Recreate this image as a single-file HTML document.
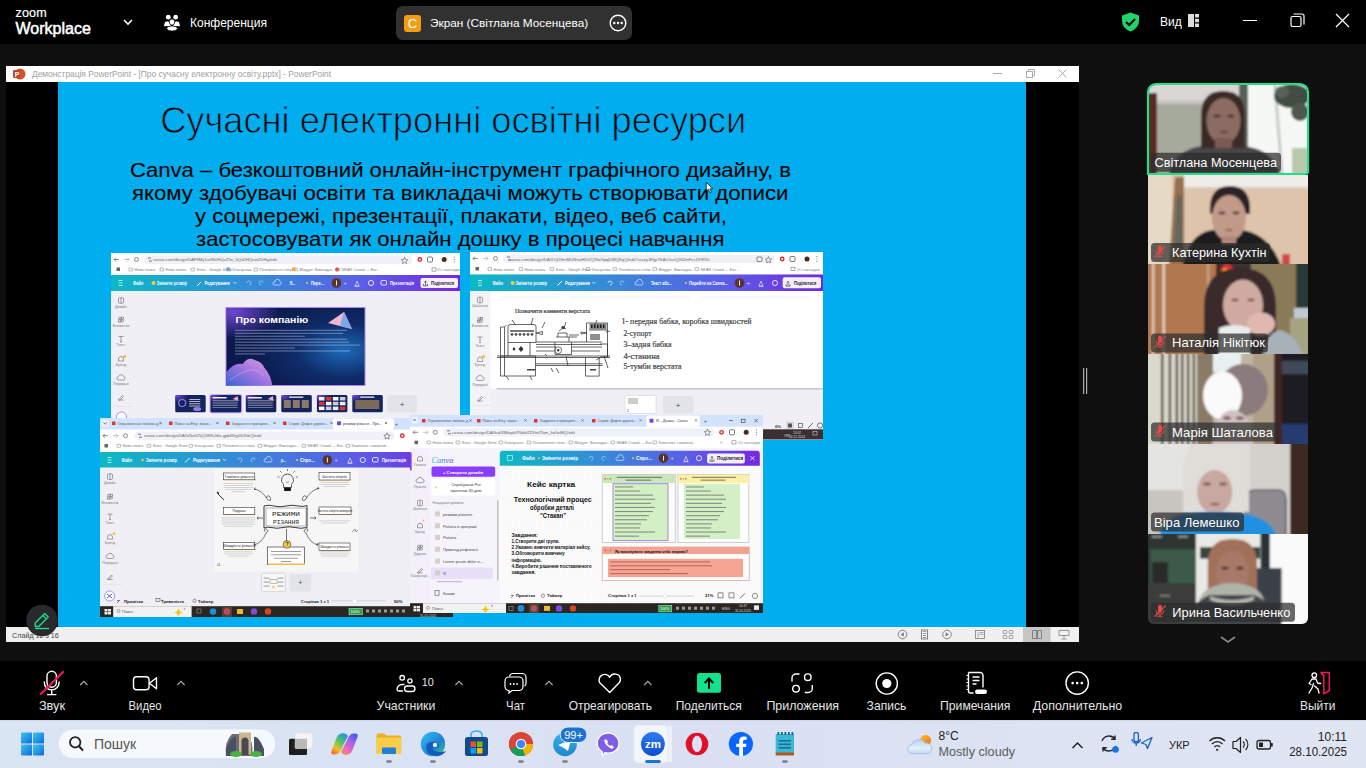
<!DOCTYPE html>
<html><head><meta charset="utf-8">
<style>
*{box-sizing:border-box;margin:0;padding:0}
html,body{width:1366px;height:768px;overflow:hidden;background:#0f0f0f;font-family:"Liberation Sans",sans-serif}
.a{position:absolute}
.w{color:#fff}
svg{display:block}
</style></head><body>
<!-- TOP BAR -->
<div class="a" style="left:0;top:0;width:1366px;height:44px;background:#000"></div>
<div class="a w" style="left:15.5px;top:6px;font-size:12.5px;line-height:14px;-webkit-text-stroke:0.2px #fff;letter-spacing:0.2px">zoom</div>
<div class="a w" style="left:15.5px;top:19.5px;font-size:16px;line-height:18px;-webkit-text-stroke:0.5px #fff">Workplace</div>
<svg class="a" style="left:122px;top:17px" width="12" height="10" viewBox="0 0 12 10"><path d="M2 3 L6 7 L10 3" stroke="#fff" stroke-width="1.6" fill="none"/></svg>
<svg class="a" style="left:162px;top:13px" width="20" height="20" viewBox="162 13 20 20"><circle cx="168.3" cy="17.2" r="2.4" fill="#fff"/><circle cx="175.6" cy="17.2" r="2.4" fill="#fff"/><path d="M163.8 26.5 v-1.5 a3.7 4 0 0 1 7.4 0 v1.5z" fill="#fff" stroke="#000" stroke-width="0.7"/><path d="M172.8 26.5 v-1.5 a3.7 4 0 0 1 7.4 0 v1.5z" fill="#fff" stroke="#000" stroke-width="0.7"/><ellipse cx="172" cy="22" rx="2.7" ry="3.1" fill="#fff" stroke="#000" stroke-width="0.7"/><ellipse cx="172.1" cy="28.5" rx="5.3" ry="2.5" fill="#fff" stroke="#000" stroke-width="0.7"/></svg>
<div class="a w" style="left:190px;top:16px;font-size:12px;line-height:14px">Конференция</div>
<div class="a" style="left:396px;top:6px;width:236px;height:34px;background:#313131;border-radius:7px"></div>
<div class="a" style="left:404px;top:15px;width:17px;height:17px;background:#f29d12;border-radius:3px;color:#fff;font-size:13px;line-height:17px;text-align:center">C</div>
<div class="a w" style="left:430px;top:16px;font-size:11.8px;line-height:14px">Экран (Світлана Мосенцева)</div>
<svg class="a" style="left:609px;top:14px" width="18" height="18" viewBox="0 0 18 18"><circle cx="9" cy="9" r="7.8" stroke="#fff" stroke-width="1.4" fill="none"/><circle cx="5.3" cy="9" r="1.2" fill="#fff"/><circle cx="9" cy="9" r="1.2" fill="#fff"/><circle cx="12.7" cy="9" r="1.2" fill="#fff"/></svg>
<svg class="a" style="left:1121px;top:12px" width="19" height="20" viewBox="0 0 19 20"><path d="M9.5 0.5 L18 3.5 L18 9 Q18 16 9.5 19.5 Q1 16 1 9 L1 3.5 Z" fill="#1fd46b"/><path d="M5 10 L8.3 13 L14 7" stroke="#000" stroke-width="2" fill="none"/></svg>
<div class="a w" style="left:1160px;top:15px;font-size:12px;line-height:14px">Вид</div>
<svg class="a" style="left:1188px;top:14px" width="11" height="13" viewBox="0 0 11 13"><rect x="0" y="0" width="6" height="13" fill="#ddd"/><rect x="7" y="0" width="4" height="3.5" fill="#ddd"/><rect x="7" y="4.75" width="4" height="3.5" fill="#ddd"/><rect x="7" y="9.5" width="4" height="3.5" fill="#ddd"/></svg>
<div class="a" style="left:1243px;top:20px;width:14px;height:1px;background:#fff"></div>
<svg class="a" style="left:1290px;top:13px" width="15" height="15" viewBox="0 0 15 15"><rect x="1" y="3.5" width="10" height="10" rx="1.5" stroke="#fff" stroke-width="1.2" fill="none"/><path d="M3.5 1 L12 1 Q14 1 14 3 L14 11.5" stroke="#fff" stroke-width="1.2" fill="none"/></svg>
<svg class="a" style="left:1335px;top:13px" width="15" height="15" viewBox="0 0 15 15"><path d="M1 1 L14 14 M14 1 L1 14" stroke="#fff" stroke-width="1.3"/></svg>
<!-- POWERPOINT WINDOW -->
<div class="a" style="left:6px;top:66px;width:1073px;height:16px;background:#fff"></div>
<svg class="a" style="left:13px;top:68px" width="13" height="12" viewBox="0 0 13 12"><circle cx="7" cy="6" r="5.5" fill="#d35230"/><rect x="0" y="2" width="7" height="8" rx="1" fill="#b7472a"/><text x="1.8" y="8.8" font-size="7" font-weight="bold" fill="#fff" font-family="Liberation Sans">P</text></svg>
<div class="a" style="left:32px;top:69px;font-size:8.4px;line-height:10px;color:#a0a0a0;white-space:nowrap">Демонстрація PowerPoint - [Про сучасну електронну освіту.pptx] - PowerPoint</div>
<div class="a" style="left:993px;top:73px;width:9px;height:1px;background:#aaa"></div>
<svg class="a" style="left:1026px;top:69px" width="9" height="9" viewBox="0 0 9 9"><rect x="0.5" y="2.5" width="6" height="6" fill="none" stroke="#aaa"/><path d="M2.5 2.5 V0.5 H8.5 V6.5 H6.5" fill="none" stroke="#aaa"/></svg>
<svg class="a" style="left:1058px;top:69px" width="9" height="9" viewBox="0 0 9 9"><path d="M0.5 0.5 L8.5 8.5 M8.5 0.5 L0.5 8.5" stroke="#aaa" stroke-width="1"/></svg>
<div class="a" style="left:6px;top:82px;width:1073px;height:545px;background:#000"></div>
<div class="a" id="slide" style="left:58px;top:82px;width:968px;height:545px;background:#00aeef;overflow:hidden"></div>
<svg class="a" style="left:0;top:82px" width="1026" height="172" viewBox="0 82 1026 172">
<text x="160.2" y="133" font-size="36" font-family="Liberation Sans" fill="#050505" stroke="#00aeef" stroke-width="0.9" textLength="586" lengthAdjust="spacingAndGlyphs">Сучасні електронні освітні ресурси</text>
<g font-size="20.3" font-family="Liberation Sans" fill="#000" stroke="#000" stroke-width="0.1">
<text x="130" y="176.5" textLength="661" lengthAdjust="spacingAndGlyphs">Canva – безкоштовний онлайн-інструмент графічного дизайну, в</text>
<text x="132" y="199.7" textLength="656.5" lengthAdjust="spacingAndGlyphs">якому здобувачі освіти та викладачі можуть створювати дописи</text>
<text x="195" y="222.7" textLength="532" lengthAdjust="spacingAndGlyphs">у соцмережі, презентації, плакати, відео, веб сайти,</text>
<text x="196" y="246" textLength="528.5" lengthAdjust="spacingAndGlyphs">застосовувати як онлайн дошку в процесі навчання</text>
</g></svg>
<!--SS-->
<svg class="a" style="left:111px;top:253px" width="349" height="167" viewBox="111 253 349 167"><defs><linearGradient id="cv1" x1="0" x2="1" y1="0" y2="0"><stop offset="0" stop-color="#0db8c6"/><stop offset="0.45" stop-color="#3a86d8"/><stop offset="0.72" stop-color="#5b5ee6"/><stop offset="1" stop-color="#7527e0"/></linearGradient>
<radialGradient id="sl1" cx="0.85" cy="0.55" r="0.7"><stop offset="0" stop-color="#1c6ab8"/><stop offset="0.5" stop-color="#0f2c6a"/><stop offset="1" stop-color="#0b1a4c"/></radialGradient>
<radialGradient id="sl1b" cx="0.05" cy="0.05" r="0.35"><stop offset="0" stop-color="#7b4be0" stop-opacity="0.9"/><stop offset="1" stop-color="#7b4be0" stop-opacity="0"/></radialGradient>
<linearGradient id="wave" x1="0" x2="1" y1="1" y2="0"><stop offset="0" stop-color="#3b6fe0"/><stop offset="0.5" stop-color="#b07ef0"/><stop offset="1" stop-color="#f0b0f0"/></linearGradient></defs><rect x="111" y="253" width="349" height="167" fill="#f0eff5"/><rect x="111" y="253" width="349" height="22" fill="#ffffff"/><path d="M114 259.5 h5 M114 259.5 l2 -2 M114 259.5 l2 2" stroke="#666" stroke-width="0.75" fill="none" /><path d="M124 259.5 h5 M129 259.5 l-2 -2 M129 259.5 l-2 2" stroke="#bbb" stroke-width="0.9" fill="none" /><circle cx="136.5" cy="259.5" r="2.0" fill="none" stroke="#666" stroke-width="0.75"/><rect x="144" y="255.5" width="268.5" height="8.5" fill="#eef1f7" rx="4.2"/><path d="M148 258.0 h3 M149 261.0 h3" stroke="#555" stroke-width="0.8" fill="none" /><text  x="153" y="261" font-size="4.2" fill="#666" font-weight="normal" font-family="Liberation Sans">canva.com/design/DAF9My1urWk/HQsZ5n_5QzDHQuinZDHg/edit</text><path d="M403.5 259.5 l1 -2.2 l1 2.2 l2.2 .3 l-1.7 1.5 l.5 2.2 l-2 -1.1 l-2 1.1 l.5 -2.2 l-1.7 -1.5z" stroke="#555" stroke-width="0.6" fill="none" /><circle cx="419.8" cy="259.5" r="2.4" fill="#e0202a" /><circle cx="419.8" cy="259.5" r="1.1" fill="#fff" /><rect x="427.5" y="257" width="5" height="5" fill="none" rx="1" stroke="#555" stroke-width="0.8"/><circle cx="444.2" cy="259.5" r="2.5" fill="#4a2a20" /><path d="M454.3 257 v0.1 M454.3 259.5 v0.1 M454.3 262 v0.1" stroke="#666" stroke-width="1" fill="none" stroke-linecap="round"/><rect x="116.5" y="267.5" width="3.5" height="3.5" fill="#666"/><rect x="129" y="268.1" width="3.6" height="2.8" fill="none" rx="0.4" stroke="#777" stroke-width="0.5"/><text  x="134.5" y="271.0" font-size="3.9" fill="#808080" font-weight="normal" font-family="Liberation Sans">Нова папка</text><rect x="160" y="268.1" width="3.6" height="2.8" fill="none" rx="0.4" stroke="#777" stroke-width="0.5"/><text  x="165.5" y="271.0" font-size="3.9" fill="#808080" font-weight="normal" font-family="Liberation Sans">Нова папка</text><rect x="191" y="268.1" width="3.6" height="2.8" fill="none" rx="0.4" stroke="#777" stroke-width="0.5"/><text  x="196.5" y="271.0" font-size="3.9" fill="#808080" font-weight="normal" font-family="Liberation Sans">Фото - Google Фото</text><rect x="227" y="268.1" width="3.6" height="2.8" fill="none" rx="0.4" stroke="#777" stroke-width="0.5"/><text  x="232.5" y="271.0" font-size="3.9" fill="#808080" font-weight="normal" font-family="Liberation Sans">Клануалка</text><rect x="254" y="268.1" width="3.6" height="2.8" fill="none" rx="0.4" stroke="#777" stroke-width="0.5"/><text  x="259.5" y="271.0" font-size="3.9" fill="#808080" font-weight="normal" font-family="Liberation Sans">Поповнення спілк...</text><rect x="294" y="268.1" width="3.6" height="2.8" fill="none" rx="0.4" stroke="#777" stroke-width="0.5"/><text  x="299.5" y="271.0" font-size="3.9" fill="#808080" font-weight="normal" font-family="Liberation Sans">Blogger: Викладач...</text><rect x="336" y="268.1" width="3.6" height="2.8" fill="none" rx="0.4" stroke="#777" stroke-width="0.5"/><text  x="341.5" y="271.0" font-size="3.9" fill="#808080" font-weight="normal" font-family="Liberation Sans">NEAR Crowd — Ear...</text><rect x="226.5" y="267.5" width="3" height="3" fill="#4fa3f7"/><rect x="292" y="267.5" width="3.5" height="3.5" fill="#f5a623" rx="0.7"/><circle cx="337" cy="269.5" r="1.9" fill="#e05050" /><text  x="437" y="271.1" font-size="4.2" fill="#8a8a8a" font-weight="normal" font-family="Liberation Sans">Усі закладки</text><rect x="432" y="267.9" width="4" height="3.2" fill="none" stroke="#777" stroke-width="0.6"/><rect x="111" y="275" width="349" height="16" fill="url(#cv1)"/><path d="M118.5 280.5 h4 M118.5 283 h4 M118.5 285.5 h4" stroke="#cfe" stroke-width="0.8" fill="none" /><text  x="133" y="285" font-size="4.8" fill="#fff" font-weight="bold" font-family="Liberation Sans" textLength="10.2" lengthAdjust="spacingAndGlyphs">Файл</text><circle cx="153.5" cy="283" r="2" fill="#f7c948" /><text  x="156.7" y="285" font-size="4.8" fill="#fff" font-weight="bold" font-family="Liberation Sans" textLength="30.2" lengthAdjust="spacingAndGlyphs">Змінити розмір</text><path d="M197 286 l4 -4" stroke="#fff" stroke-width="1" fill="none" /><text  x="204.5" y="285" font-size="4.8" fill="#fff" font-weight="bold" font-family="Liberation Sans" textLength="25" lengthAdjust="spacingAndGlyphs">Редагування</text><path d="M233.5 282 l1.5 1.5 l1.5 -1.5" stroke="#fff" stroke-width="0.7" fill="none" /><path d="M247 283 a2 2 0 1 1 2 2" stroke="#9fc7ef" stroke-width="0.8" fill="none" /><path d="M263 283 a2 2 0 1 0 -2 2" stroke="#9fc7ef" stroke-width="0.8" fill="none" /><path d="M274 285 h6 a2 2 0 0 0 0 -3.5 a2.5 2.5 0 0 0 -5 0.5 a1.5 1.5 0 0 0 -1 3z" stroke="#dbe6ff" stroke-width="0.7" fill="none" /><text  x="290" y="285" font-size="4.8" fill="#fff" font-weight="bold" font-family="Liberation Sans" textLength="5.3" lengthAdjust="spacingAndGlyphs">В...</text><circle cx="307" cy="283" r="1" fill="#f7c948" /><text  x="311" y="285" font-size="4.8" fill="#fff" font-weight="bold" font-family="Liberation Sans" textLength="13" lengthAdjust="spacingAndGlyphs">Пере...</text><circle cx="336.4" cy="283" r="4.8" fill="#5a3428" /><rect x="336" y="280.5" width="0.9" height="5" fill="#fff"/><text  x="343.5" y="285" font-size="5.5" fill="#ddd" font-weight="normal" font-family="Liberation Sans">+</text><path d="M355 286 l2 -5 l2 5z M354.5 286.3 h5" stroke="#e6e0ff" stroke-width="0.7" fill="none" /><circle cx="371" cy="283" r="2.6" fill="none" stroke="#fff" stroke-width="0.8"/><rect x="381" y="280.5" width="5.5" height="4.5" fill="none" rx="1" stroke="#fff" stroke-width="0.8"/><text  x="390" y="285" font-size="4.8" fill="#fff" font-weight="bold" font-family="Liberation Sans" textLength="24" lengthAdjust="spacingAndGlyphs">Презентація</text><rect x="420.5" y="278" width="37.5" height="10" fill="#f5efff" rx="2"/><path d="M423.5 284 v1.8 h4 v-1.8 M425.5 285 v-4 l-1.2 1.2 M425.5 281 l1.2 1.2" stroke="#333" stroke-width="0.7" fill="none" /><text  x="431" y="285" font-size="4.8" fill="#222" font-weight="bold" font-family="Liberation Sans" textLength="23" lengthAdjust="spacingAndGlyphs">Поділитися</text><rect x="118.5" y="297.7" width="5" height="5.6" rx="1.2" stroke="#666" stroke-width="0.6" fill="none"/><path d="M121 297.7 v5.6" stroke="#666" stroke-width="0.6" fill="none"/><text text-anchor="middle" x="121" y="307.5" font-size="3.6" fill="#777" font-weight="normal" font-family="Liberation Sans">Дизайн</text><circle cx="119.7" cy="318.2" r="1.1" stroke="#666" stroke-width="0.6" fill="none"/><rect x="121.3" y="317.1" width="2.2" height="2.2" stroke="#666" stroke-width="0.6" fill="none"/><rect x="118.6" y="319.8" width="2.2" height="2.2" stroke="#666" stroke-width="0.6" fill="none"/><circle cx="122.4" cy="320.9" r="1.1" stroke="#666" stroke-width="0.6" fill="none"/><text text-anchor="middle" x="121" y="326.5" font-size="3.6" fill="#777" font-weight="normal" font-family="Liberation Sans">Елементи</text><path d="M118.5 336.5 h5 M121 336.5 v5.5 M120 342 h2" stroke="#666" stroke-width="0.6" fill="none"/><text text-anchor="middle" x="121" y="346" font-size="3.6" fill="#777" font-weight="normal" font-family="Liberation Sans">Текст</text><path d="M118.5 361.0 v-2 a2.5 2.5 0 0 1 5 0 v2z" stroke="#666" stroke-width="0.6" fill="none"/><text text-anchor="middle" x="121" y="365.5" font-size="3.6" fill="#777" font-weight="normal" font-family="Liberation Sans">Бренд</text><path d="M118.2 380 a1.8 1.8 0 0 1 0.5 -3.5 a2.5 2.5 0 0 1 4.8 0 a1.8 1.8 0 0 1 0.3 3.5z" stroke="#666" stroke-width="0.6" fill="none"/><text text-anchor="middle" x="121" y="385" font-size="3.6" fill="#777" font-weight="normal" font-family="Liberation Sans">Передані</text><path d="M118.5 399.5 l4 -4 l1 1 l-4 4z M118.5 400 h5" stroke="#666" stroke-width="0.6" fill="none"/><circle cx="124.5" cy="356.5" r="1.6" fill="#f7b928" /><rect x="113" y="406" width="20" height="0.5" fill="#ddd"/><circle cx="121.5" cy="417" r="5" fill="#fff" stroke="#8a7af0" stroke-width="0.8"/><rect x="225.5" y="307" width="140" height="79" fill="#a985f5"/><rect x="226.5" y="308" width="138" height="77" fill="url(#sl1)"/><rect x="226.5" y="308" width="138" height="77" fill="url(#sl1b)"/><text  x="235.6" y="323.3" font-size="9.5" fill="#fff" font-weight="bold" font-family="Liberation Sans" textLength="72.7" lengthAdjust="spacingAndGlyphs">Про компанію</text><rect x="235" y="329.8" width="112" height="1.1" fill="#c9d0e8" opacity="0.45"/><rect x="235" y="332.75" width="108" height="1.1" fill="#c9d0e8" opacity="0.45"/><rect x="235" y="335.7" width="70" height="1.1" fill="#c9d0e8" opacity="0.45"/><rect x="235" y="338.65000000000003" width="112" height="1.1" fill="#c9d0e8" opacity="0.45"/><rect x="235" y="341.6" width="114" height="1.1" fill="#c9d0e8" opacity="0.45"/><rect x="235" y="344.55" width="125" height="1.1" fill="#c9d0e8" opacity="0.45"/><rect x="235" y="347.5" width="60" height="1.1" fill="#c9d0e8" opacity="0.45"/><rect x="235" y="350.45" width="115" height="1.1" fill="#c9d0e8" opacity="0.45"/><rect x="235" y="353.40000000000003" width="30" height="1.1" fill="#c9d0e8" opacity="0.45"/><path d="M328 323 L344 312 L352 329Z" stroke="none" stroke-width="1" fill="#f2b7d0" /><path d="M344 312 L352 329 L340 326Z" stroke="none" stroke-width="1" fill="#7fa6e8" /><path d="M226.5 372 q8 -10 16 -8 q6 -8 12 -4 q8 2 10 8 q6 6 8 18 h-46z" stroke="none" stroke-width="1" fill="url(#wave)" opacity="0.9"/><path d="M230 380 q10 -8 20 -10 q8 -1 14 6" stroke="#f0c0f0" stroke-width="0.6" fill="none" opacity="0.7"/><rect x="175.2" y="395" width="30.5" height="17.3" fill="#15245e" rx="1.5"/><rect x="175.2" y="395" width="30.5" height="17.3" fill="url(#sl1b)" rx="1.5"/><circle cx="182.2" cy="403" r="3.5" fill="none" stroke="#8a7af0" stroke-width="1.2"/><rect x="189.2" y="399.0" width="11" height="0.8" fill="#ddd"/><rect x="189.2" y="401.2" width="11" height="0.8" fill="#ddd"/><rect x="189.2" y="403.4" width="11" height="0.8" fill="#ddd"/><rect x="189.2" y="405.6" width="11" height="0.8" fill="#ddd"/><ellipse cx="197.2" cy="409" rx="4" ry="2" fill="#9a7af0" /><rect x="209.6" y="394.2" width="32.5" height="19" fill="#b69cf7" rx="2"/><rect x="210.6" y="395" width="30.5" height="17.3" fill="#15245e" rx="1.5"/><rect x="210.6" y="395" width="30.5" height="17.3" fill="url(#sl1b)" rx="1.5"/><rect x="212.6" y="397" width="14" height="1.5" fill="#eee"/><rect x="212.6" y="400.0" width="25" height="0.6" fill="#aab" rx="opacity="0.7""/><rect x="212.6" y="401.8" width="25" height="0.6" fill="#aab" rx="opacity="0.7""/><rect x="212.6" y="403.6" width="25" height="0.6" fill="#aab" rx="opacity="0.7""/><rect x="212.6" y="405.4" width="25" height="0.6" fill="#aab" rx="opacity="0.7""/><rect x="212.6" y="407.2" width="25" height="0.6" fill="#aab" rx="opacity="0.7""/><path d="M232.6 399 l5 -3 l1 5z" stroke="none" stroke-width="1" fill="#e8a8d0" /><rect x="245.8" y="395" width="30.5" height="17.3" fill="#15245e" rx="1.5"/><rect x="245.8" y="395" width="30.5" height="17.3" fill="url(#sl1b)" rx="1.5"/><rect x="247.8" y="397" width="14" height="1.5" fill="#eee"/><rect x="247.8" y="400.0" width="25" height="0.6" fill="#aab" rx="opacity="0.7""/><rect x="247.8" y="401.8" width="25" height="0.6" fill="#aab" rx="opacity="0.7""/><rect x="247.8" y="403.6" width="25" height="0.6" fill="#aab" rx="opacity="0.7""/><rect x="247.8" y="405.4" width="25" height="0.6" fill="#aab" rx="opacity="0.7""/><rect x="247.8" y="407.2" width="25" height="0.6" fill="#aab" rx="opacity="0.7""/><path d="M267.8 399 l5 -3 l1 5z" stroke="none" stroke-width="1" fill="#e8a8d0" /><rect x="281.3" y="395" width="30.5" height="17.3" fill="#15245e" rx="1.5"/><rect x="281.3" y="395" width="30.5" height="17.3" fill="url(#sl1b)" rx="1.5"/><rect x="289.3" y="396.5" width="14" height="1.3" fill="#eee"/><rect x="283.8" y="400" width="7" height="8" fill="#8a7a6a"/><rect x="292.8" y="400" width="7" height="8" fill="#8a7a6a"/><rect x="301.8" y="400" width="7" height="8" fill="#8a7a6a"/><rect x="316.9" y="395" width="30.5" height="17.3" fill="#15245e" rx="1.5"/><rect x="316.9" y="395" width="30.5" height="17.3" fill="url(#sl1b)" rx="1.5"/><rect x="318.9" y="397.0" width="5.5" height="3.5" fill="#eee"/><rect x="318.9" y="401.8" width="5.5" height="3.5" fill="#d33"/><rect x="318.9" y="406.6" width="5.5" height="3.5" fill="#fff"/><rect x="325.9" y="397.0" width="5.5" height="3.5" fill="#d33"/><rect x="325.9" y="401.8" width="5.5" height="3.5" fill="#fff"/><rect x="325.9" y="406.6" width="5.5" height="3.5" fill="#ccd"/><rect x="332.9" y="397.0" width="5.5" height="3.5" fill="#fff"/><rect x="332.9" y="401.8" width="5.5" height="3.5" fill="#ccd"/><rect x="332.9" y="406.6" width="5.5" height="3.5" fill="#eee"/><rect x="339.9" y="397.0" width="5.5" height="3.5" fill="#ccd"/><rect x="339.9" y="401.8" width="5.5" height="3.5" fill="#eee"/><rect x="339.9" y="406.6" width="5.5" height="3.5" fill="#d33"/><rect x="352.3" y="395" width="30.5" height="17.3" fill="#15245e" rx="1.5"/><rect x="352.3" y="395" width="30.5" height="17.3" fill="url(#sl1b)" rx="1.5"/><rect x="360.3" y="396.5" width="14" height="1.3" fill="#eee"/><rect x="355.3" y="400" width="24" height="9" fill="#7a6a5a"/><rect x="387" y="395" width="30" height="17.5" fill="#e3e3ea" rx="1.5"/><text text-anchor="middle" x="402" y="406.5" font-size="8" fill="#444" font-weight="normal" font-family="Liberation Sans">+</text></svg>
<svg class="a" style="left:470px;top:252px" width="353" height="188" viewBox="470 252 353 188"><defs><linearGradient id="cv2" x1="0" x2="1" y1="0" y2="0"><stop offset="0" stop-color="#0db8c6"/><stop offset="0.42" stop-color="#3a86d8"/><stop offset="0.72" stop-color="#5b5ee6"/><stop offset="1" stop-color="#7527e0"/></linearGradient></defs><rect x="470" y="252" width="353" height="188" fill="#f0eff5"/><rect x="470" y="252" width="353" height="22" fill="#ffffff"/><path d="M473 258.5 h5 M473 258.5 l2 -2 M473 258.5 l2 2" stroke="#666" stroke-width="0.75" fill="none" /><path d="M483 258.5 h5 M488 258.5 l-2 -2 M488 258.5 l-2 2" stroke="#bbb" stroke-width="0.9" fill="none" /><circle cx="495.5" cy="258.5" r="2.0" fill="none" stroke="#666" stroke-width="0.75"/><rect x="503" y="254.5" width="272" height="8.5" fill="#eef1f7" rx="4.2"/><path d="M507 257.0 h3 M508 260.0 h3" stroke="#555" stroke-width="0.8" fill="none" /><text  x="509" y="261" font-size="4.2" fill="#666" font-weight="normal" font-family="Liberation Sans">canva.com/design/DAGYjUGmMU/ExxHDrZQfVoGpqDiMQKqQ/edit?ui=eyJEIjp7IkAiOnsiQiI6ZmFsc2V9fX0</text><rect x="757" y="257" width="5" height="4.5" fill="none" rx="0.6" stroke="#555" stroke-width="0.7"/><path d="M767.5 258.8 l1 -2.2 l1 2.2 l2.2 .3 l-1.7 1.5 l.5 2.2 l-2 -1.1 l-2 1.1 l.5 -2.2 l-1.7 -1.5z" stroke="#555" stroke-width="0.6" fill="none" /><circle cx="782.2" cy="259" r="2.4" fill="#e0202a" /><circle cx="782.2" cy="259" r="1.1" fill="#fff" /><rect x="790" y="256.5" width="5" height="5" fill="none" rx="1" stroke="#555" stroke-width="0.8"/><circle cx="807" cy="259" r="2.5" fill="#4a2a20" /><path d="M816.9 256.5 v0.1 M816.9 259 v0.1 M816.9 261.5 v0.1" stroke="#666" stroke-width="1" fill="none" stroke-linecap="round"/><rect x="475.5" y="267" width="3.5" height="3.5" fill="#666"/><rect x="488" y="267.6" width="3.6" height="2.8" fill="none" rx="0.4" stroke="#777" stroke-width="0.5"/><text  x="493.5" y="270.5" font-size="3.9" fill="#808080" font-weight="normal" font-family="Liberation Sans">Нова папка</text><rect x="519" y="267.6" width="3.6" height="2.8" fill="none" rx="0.4" stroke="#777" stroke-width="0.5"/><text  x="524.5" y="270.5" font-size="3.9" fill="#808080" font-weight="normal" font-family="Liberation Sans">Нова папка</text><rect x="550" y="267.6" width="3.6" height="2.8" fill="none" rx="0.4" stroke="#777" stroke-width="0.5"/><text  x="555.5" y="270.5" font-size="3.9" fill="#808080" font-weight="normal" font-family="Liberation Sans">Фото - Google Фото</text><rect x="586" y="267.6" width="3.6" height="2.8" fill="none" rx="0.4" stroke="#777" stroke-width="0.5"/><text  x="591.5" y="270.5" font-size="3.9" fill="#808080" font-weight="normal" font-family="Liberation Sans">Клануалка</text><rect x="613" y="267.6" width="3.6" height="2.8" fill="none" rx="0.4" stroke="#777" stroke-width="0.5"/><text  x="618.5" y="270.5" font-size="3.9" fill="#808080" font-weight="normal" font-family="Liberation Sans">Поповнення спілк...</text><rect x="653" y="267.6" width="3.6" height="2.8" fill="none" rx="0.4" stroke="#777" stroke-width="0.5"/><text  x="658.5" y="270.5" font-size="3.9" fill="#808080" font-weight="normal" font-family="Liberation Sans">Blogger: Викладач...</text><rect x="695" y="267.6" width="3.6" height="2.8" fill="none" rx="0.4" stroke="#777" stroke-width="0.5"/><text  x="700.5" y="270.5" font-size="3.9" fill="#808080" font-weight="normal" font-family="Liberation Sans">NEAR Crowd — Ear...</text><text  x="797" y="270.6" font-size="3.9" fill="#8a8a8a" font-weight="normal" font-family="Liberation Sans">Усі закладки</text><rect x="791" y="267.4" width="4" height="3.2" fill="none" stroke="#777" stroke-width="0.6"/><rect x="470" y="274.5" width="353" height="16.5" fill="url(#cv2)"/><path d="M478 280.5 h4 M478 283 h4 M478 285.5 h4" stroke="#cfe" stroke-width="0.8" fill="none" /><text  x="492.4" y="284.6" font-size="4.8" fill="#fff" font-weight="bold" font-family="Liberation Sans" textLength="10.6" lengthAdjust="spacingAndGlyphs">Файл</text><circle cx="512.7" cy="283" r="2" fill="#f7c948" /><text  x="515.5" y="284.6" font-size="4.8" fill="#fff" font-weight="bold" font-family="Liberation Sans" textLength="31.5" lengthAdjust="spacingAndGlyphs">Змінити розмір</text><path d="M557.5 285.5 l4.5 -4.5" stroke="#fff" stroke-width="1" fill="none" /><text  x="564.9" y="284.6" font-size="4.8" fill="#fff" font-weight="bold" font-family="Liberation Sans" textLength="25" lengthAdjust="spacingAndGlyphs">Редагування</text><path d="M592.3 282 l1.5 1.5 l1.5 -1.5" stroke="#fff" stroke-width="0.7" fill="none" /><path d="M608 283 a2 2 0 1 1 2 2" stroke="#e0ecff" stroke-width="0.8" fill="none" /><path d="M624 283 a2 2 0 1 0 -2 2" stroke="#9fc7ef" stroke-width="0.8" fill="none" /><path d="M636 285 h6 a2 2 0 0 0 0 -3.5 a2.5 2.5 0 0 0 -5 0.5 a1.5 1.5 0 0 0 -1 3z" stroke="#dbe6ff" stroke-width="0.7" fill="none" /><text  x="650.9" y="284.6" font-size="4.8" fill="#fff" font-weight="bold" font-family="Liberation Sans" textLength="21" lengthAdjust="spacingAndGlyphs">Текст абз...</text><circle cx="685.8" cy="283" r="1" fill="#f7c948" /><text  x="689.1" y="284.6" font-size="4.8" fill="#fff" font-weight="bold" font-family="Liberation Sans" textLength="38.6" lengthAdjust="spacingAndGlyphs">Перейти на Canva...</text><circle cx="739.5" cy="283" r="4.8" fill="#5a3428" /><rect x="739.1" y="280.5" width="0.9" height="5" fill="#fff"/><text  x="746.5" y="285" font-size="6" fill="#eee" font-weight="normal" font-family="Liberation Sans">+</text><path d="M759 286 l2 -5 l2 5z M758.5 286.3 h5" stroke="#e6e0ff" stroke-width="0.7" fill="none" /><circle cx="775" cy="283" r="2.6" fill="none" stroke="#fff" stroke-width="0.8"/><rect x="782.7" y="277.2" width="38.3" height="11" fill="#f5efff" rx="2"/><path d="M786 284.3 v1.8 h4 v-1.8 M788 285.3 v-4 l-1.2 1.2 M788 281.3 l1.2 1.2" stroke="#333" stroke-width="0.7" fill="none" /><text  x="793.9" y="284.6" font-size="4.8" fill="#222" font-weight="bold" font-family="Liberation Sans" textLength="22.4" lengthAdjust="spacingAndGlyphs">Поділитися</text><rect x="470" y="291" width="20.5" height="149" fill="#f3f3f7"/><rect x="490.5" y="291" width="332.5" height="98" fill="#ffffff"/><rect x="496.7" y="388" width="326.3" height="1.6" fill="#c8c8c8"/><rect x="477.5" y="297.2" width="5" height="5.6" rx="1.2" stroke="#666" stroke-width="0.6" fill="none"/><path d="M480 297.2 v5.6" stroke="#666" stroke-width="0.6" fill="none"/><text text-anchor="middle" x="480" y="307" font-size="3.6" fill="#777" font-weight="normal" font-family="Liberation Sans">Шаблони</text><circle cx="478.7" cy="318.7" r="1.1" stroke="#666" stroke-width="0.6" fill="none"/><rect x="480.3" y="317.6" width="2.2" height="2.2" stroke="#666" stroke-width="0.6" fill="none"/><rect x="477.6" y="320.3" width="2.2" height="2.2" stroke="#666" stroke-width="0.6" fill="none"/><circle cx="481.4" cy="321.4" r="1.1" stroke="#666" stroke-width="0.6" fill="none"/><text text-anchor="middle" x="480" y="327" font-size="3.6" fill="#777" font-weight="normal" font-family="Liberation Sans">Елементи</text><path d="M477.5 337.0 h5 M480 337.0 v5.5 M479 342.5 h2" stroke="#666" stroke-width="0.6" fill="none"/><text text-anchor="middle" x="480" y="346.5" font-size="3.6" fill="#777" font-weight="normal" font-family="Liberation Sans">Текст</text><path d="M477.5 361.5 v-2 a2.5 2.5 0 0 1 5 0 v2z" stroke="#666" stroke-width="0.6" fill="none"/><text text-anchor="middle" x="480" y="366" font-size="3.6" fill="#777" font-weight="normal" font-family="Liberation Sans">Бренд</text><path d="M477.2 380.5 a1.8 1.8 0 0 1 0.5 -3.5 a2.5 2.5 0 0 1 4.8 0 a1.8 1.8 0 0 1 0.3 3.5z" stroke="#666" stroke-width="0.6" fill="none"/><text text-anchor="middle" x="480" y="385.5" font-size="3.6" fill="#777" font-weight="normal" font-family="Liberation Sans">Передані</text><path d="M477.5 400.5 l4 -4 l1 1 l-4 4z M477.5 401 h5" stroke="#666" stroke-width="0.6" fill="none"/><circle cx="483.5" cy="356.5" r="1.6" fill="#f7b928" /><rect x="472" y="405.5" width="20" height="0.5" fill="#ddd"/><rect x="500" y="296" width="60" height="3" fill="#f9f9f9"/><rect x="570" y="296" width="120" height="3" fill="#f9f9f9"/><rect x="700" y="296" width="110" height="3" fill="#f9f9f9"/><text font-family="Liberation Serif" stroke="#333" stroke-width="0.15" x="515" y="312.6" font-size="5.4" fill="#333" font-weight="normal" font-family="Liberation Sans" textLength="75" lengthAdjust="spacingAndGlyphs">Позначити елементи верстата</text><path d="M508 342.5 v-16 a2 2 0 0 1 2 -2 h24 a2 2 0 0 1 2 2 v16 M500.5 376 v-49 h4 l2 -2 M504.5 327 v49 M500.5 356 h35 M500.5 376 h35 v-20 M497 356 h113 M497 357.5 h113 M508 342.5 v13.5 M530 342.5 v13.5 M508 342.5 h28 M536 342 h66 M536 344.5 h66 M536 347 h20 M572 347 h30 M536 351 h18 M572 351 h28 M555 342 v12.5 h16.5 v-12.5 M556 337 h13 v5 M558 337 v-4 h9 v4 M559 331 l4 -3 l3 1 M569 335 h10 M569 337 h8 M586.5 342 v-19 h21 v34 h-7 M589 330 h18 M600 344 h7.5 v13 M535.6 363.8 h67 M535.6 365.5 h67 M585.5 357.7 v18.4 h13.7 v-18.4 M536 333 l6.5 -1.5 v3z M587 333 l-6 -1 v2z M545 354 l2 2 M512 320 l3 4 M533 318 l-2 7 M545 322 l-3 6 M566 322 l-2 6 M597 320 l-2 5 M606 332 l4 -1 M506 376 l3 4 M530 376 l2 4 M551 368 l2 4 M556 368 l3 5 M566 356 l2 10 M596 360 l5 -3 M604 356 l4 12" stroke="#333" stroke-width="0.75" fill="none" /><circle cx="512" cy="334.4" r="1.4" fill="#555" /><circle cx="516" cy="334.4" r="1.4" fill="#555" /><circle cx="520" cy="334.4" r="1.4" fill="#555" /><circle cx="524" cy="334.4" r="1.4" fill="#555" /><circle cx="528" cy="334.4" r="1.4" fill="#555" /><circle cx="532" cy="334.4" r="1.4" fill="#555" /><rect x="510" y="330" width="24" height="2" fill="#777"/><path d="M521 346 l2.5 3 l-2.5 3 l-2.5 -3z M514 347 l1.5 2 l-1.5 2 l-1.5 -2z" stroke="none" stroke-width="1" fill="#333" /><circle cx="558.2" cy="350.2" r="3.4" fill="none" stroke="#333" stroke-width="0.7"/><circle cx="558.2" cy="350.2" r="1.2" fill="#333" /><rect x="589.5" y="323.5" width="17" height="6" fill="#555" opacity="0.7"/><rect x="591" y="324.5" width="1.5" height="3.5" fill="#222"/><rect x="594" y="324.5" width="1.5" height="3.5" fill="#222"/><rect x="597" y="324.5" width="1.5" height="3.5" fill="#222"/><rect x="600" y="324.5" width="1.5" height="3.5" fill="#222"/><rect x="603" y="324.5" width="1.5" height="3.5" fill="#222"/><rect x="590" y="334" width="10" height="6" fill="#444" opacity="0.6"/><circle cx="563" cy="327.5" r="1.6" fill="#333" /><rect x="527" y="369" width="8" height="1.5" fill="#444"/><rect x="590" y="369" width="6" height="1.5" fill="#444"/><text font-family="Liberation Serif" stroke="#484848" stroke-width="0.2" x="621.5" y="323.7" font-size="7.4" fill="#484848" font-weight="normal" font-family="Liberation Sans" textLength="130" lengthAdjust="spacingAndGlyphs">1- передня бабка, коробка  швидкостей</text><text font-family="Liberation Serif" stroke="#484848" stroke-width="0.2" x="623.5" y="335.6" font-size="7.4" fill="#484848" font-weight="normal" font-family="Liberation Sans" textLength="28" lengthAdjust="spacingAndGlyphs">2-супорт</text><text font-family="Liberation Serif" stroke="#484848" stroke-width="0.2" x="623.5" y="346.8" font-size="7.4" fill="#484848" font-weight="normal" font-family="Liberation Sans" textLength="48" lengthAdjust="spacingAndGlyphs">3–задня бабка</text><text font-family="Liberation Serif" stroke="#484848" stroke-width="0.2" x="623.5" y="358.6" font-size="7.4" fill="#484848" font-weight="normal" font-family="Liberation Sans" textLength="36" lengthAdjust="spacingAndGlyphs">4-станина</text><text font-family="Liberation Serif" stroke="#484848" stroke-width="0.2" x="623.5" y="369.2" font-size="7.4" fill="#484848" font-weight="normal" font-family="Liberation Sans" textLength="58" lengthAdjust="spacingAndGlyphs">5-тумби верстата</text><rect x="625" y="395.5" width="31" height="18" fill="#ffffff" rx="1.5" stroke="#ccc" stroke-width="0.5"/><rect x="628" y="398" width="10" height="6" fill="#999" opacity="0.5"/><text  x="627" y="411.5" font-size="3.5" fill="#333" font-weight="normal" font-family="Liberation Sans">1</text><rect x="663" y="396" width="30.5" height="17.5" fill="#e3e3ea" rx="1.5"/><text text-anchor="middle" x="678" y="407.5" font-size="8" fill="#444" font-weight="normal" font-family="Liberation Sans">+</text><text  x="775" y="428" font-size="4.2" fill="#333" font-weight="bold" font-family="Liberation Sans">6%</text><rect x="786" y="421.5" width="8" height="8" fill="#d8d8de" rx="1"/><rect x="788" y="423.5" width="4" height="4" fill="#555"/><rect x="798.5" y="423.5" width="4" height="4" fill="none" stroke="#555" stroke-width="0.7"/><path d="M808 428 l5 -5" stroke="#444" stroke-width="0.8" fill="none" /><circle cx="820" cy="425.5" r="2.6" fill="none" stroke="#444" stroke-width="0.7"/><rect x="470" y="429.3" width="353" height="10.2" fill="#3a3030"/><text text-anchor="middle" x="797" y="433.5" font-size="3.2" fill="#ddd" font-weight="normal" font-family="Liberation Sans">13:02</text><text text-anchor="middle" x="797" y="438" font-size="3.2" fill="#ddd" font-weight="normal" font-family="Liberation Sans">04.12.2024</text><rect x="813" y="431.5" width="4" height="3.5" fill="none" stroke="#ccc" stroke-width="0.6"/><text  x="784" y="436.5" font-size="3.3" fill="#ddd" font-weight="normal" font-family="Liberation Sans">УКР</text></svg>
<svg class="a" style="left:100px;top:418px" width="353" height="199" viewBox="100 418 353 199"><defs><linearGradient id="cv3" x1="0" x2="1" y1="0" y2="0"><stop offset="0" stop-color="#0db8c6"/><stop offset="0.42" stop-color="#3a86d8"/><stop offset="0.72" stop-color="#5b5ee6"/><stop offset="1" stop-color="#7527e0"/></linearGradient></defs><rect x="100" y="418" width="353" height="199" fill="#f0eff5"/><rect x="100" y="418" width="353" height="11.6" fill="#d3e3fd"/><rect x="101.5" y="419.5" width="7.5" height="7.5" fill="#e8f0fe" rx="1.5"/><path d="M103.5 422.5 l1.7 1.7 l1.7 -1.7" stroke="#444" stroke-width="0.7" fill="none" /><rect x="112" y="421.5" width="3.5" height="3.5" fill="#d33" rx="0.5"/><text  x="117.5" y="425" font-size="3.6" fill="#555" font-weight="normal" font-family="Liberation Sans">Ограниченная любовь д...</text><path d="M159.5 422 l2 2 M161.5 422 l-2 2" stroke="#444" stroke-width="0.6" fill="none" /><rect x="169" y="421.5" width="3.5" height="3.5" fill="#d33" rx="0.5"/><text  x="174.5" y="425" font-size="3.6" fill="#555" font-weight="normal" font-family="Liberation Sans">Поиск на Etsy: заказ...</text><path d="M216.5 422 l2 2 M218.5 422 l-2 2" stroke="#444" stroke-width="0.6" fill="none" /><rect x="226" y="421.5" width="3.5" height="3.5" fill="#d33" rx="0.5"/><text  x="231.5" y="425" font-size="3.6" fill="#555" font-weight="normal" font-family="Liberation Sans">Завдання в принципе...</text><path d="M273.5 422 l2 2 M275.5 422 l-2 2" stroke="#444" stroke-width="0.6" fill="none" /><rect x="283" y="421.5" width="3.5" height="3.5" fill="#d33" rx="0.5"/><text  x="288.5" y="425" font-size="3.6" fill="#555" font-weight="normal" font-family="Liberation Sans">Стрим: Дефне дорого...</text><path d="M330.5 422 l2 2 M332.5 422 l-2 2" stroke="#444" stroke-width="0.6" fill="none" /><rect x="333" y="418.5" width="61" height="11.1" fill="#ffffff" rx="2"/><rect x="337" y="421.3" width="4" height="4" fill="#6a4be0" rx="0.8"/><text  x="343" y="425" font-size="3.6" fill="#333" font-weight="normal" font-family="Liberation Sans">режими різання - Пре...</text><path d="M385 422 l2 2 M387 422 l-2 2" stroke="#444" stroke-width="0.6" fill="none" /><text  x="395" y="425.5" font-size="5" fill="#444" font-weight="normal" font-family="Liberation Sans">+</text><rect x="100" y="429.6" width="353" height="22.4" fill="#ffffff"/><path d="M103 435.7 h5 M103 435.7 l2 -2 M103 435.7 l2 2" stroke="#666" stroke-width="0.75" fill="none" /><path d="M113 435.7 h5 M118 435.7 l-2 -2 M118 435.7 l-2 2" stroke="#bbb" stroke-width="0.9" fill="none" /><circle cx="125.5" cy="435.7" r="2.0" fill="none" stroke="#666" stroke-width="0.75"/><rect x="134.2" y="431.5" width="260.3" height="8.5" fill="#eef1f7" rx="4.2"/><path d="M138 434.2 h3 M139 437.2 h3" stroke="#555" stroke-width="0.8" fill="none" /><text  x="144" y="437.2" font-size="4.2" fill="#666" font-weight="normal" font-family="Liberation Sans">canva.com/design/DAGZbr625jQ/WfkJtkk-gpb66fg0S2fdrQ/edit</text><path d="M386 435 l1 -2.2 l1 2.2 l2.2 .3 l-1.7 1.5 l.5 2.2 l-2 -1.1 l-2 1.1 l.5 -2.2 l-1.7 -1.5z" stroke="#555" stroke-width="0.6" fill="none" /><circle cx="402.3" cy="435.7" r="2.4" fill="#e0202a" /><circle cx="402.3" cy="435.7" r="1.1" fill="#fff" /><rect x="104.5" y="444" width="3.5" height="3.5" fill="#666"/><rect x="117" y="444.40000000000003" width="3.6" height="2.8" fill="none" rx="0.4" stroke="#777" stroke-width="0.5"/><text  x="122.5" y="447.3" font-size="3.9" fill="#808080" font-weight="normal" font-family="Liberation Sans">Нова папка</text><rect x="147" y="444.40000000000003" width="3.6" height="2.8" fill="none" rx="0.4" stroke="#777" stroke-width="0.5"/><text  x="152.5" y="447.3" font-size="3.9" fill="#808080" font-weight="normal" font-family="Liberation Sans">Фото - Google Фото</text><rect x="189" y="444.40000000000003" width="3.6" height="2.8" fill="none" rx="0.4" stroke="#777" stroke-width="0.5"/><text  x="194.5" y="447.3" font-size="3.9" fill="#808080" font-weight="normal" font-family="Liberation Sans">Клануалка</text><rect x="217" y="444.40000000000003" width="3.6" height="2.8" fill="none" rx="0.4" stroke="#777" stroke-width="0.5"/><text  x="222.5" y="447.3" font-size="3.9" fill="#808080" font-weight="normal" font-family="Liberation Sans">Поповнення спілк...</text><rect x="258" y="444.40000000000003" width="3.6" height="2.8" fill="none" rx="0.4" stroke="#777" stroke-width="0.5"/><text  x="263.5" y="447.3" font-size="3.9" fill="#808080" font-weight="normal" font-family="Liberation Sans">Blogger: Викладач...</text><rect x="302" y="444.40000000000003" width="3.6" height="2.8" fill="none" rx="0.4" stroke="#777" stroke-width="0.5"/><text  x="307.5" y="447.3" font-size="3.9" fill="#808080" font-weight="normal" font-family="Liberation Sans">NEAR Crowd — Ear...</text><rect x="346" y="444.40000000000003" width="3.6" height="2.8" fill="none" rx="0.4" stroke="#777" stroke-width="0.5"/><text  x="351.5" y="447.3" font-size="3.9" fill="#808080" font-weight="normal" font-family="Liberation Sans">Комплекс самоосві...</text><rect x="100" y="452" width="353" height="15.5" fill="url(#cv3)"/><path d="M107.5 457.5 h4 M107.5 460 h4 M107.5 462.5 h4" stroke="#cfe" stroke-width="0.8" fill="none" /><text  x="121.6" y="461.7" font-size="4.8" fill="#fff" font-weight="bold" font-family="Liberation Sans" textLength="10.4" lengthAdjust="spacingAndGlyphs">Файл</text><circle cx="142.5" cy="460" r="1.2" fill="#f7c948" /><text  x="146" y="461.7" font-size="4.8" fill="#fff" font-weight="bold" font-family="Liberation Sans" textLength="31" lengthAdjust="spacingAndGlyphs">Змінити розмір</text><path d="M185 462.5 l4.5 -4.5" stroke="#fff" stroke-width="1" fill="none" /><text  x="193" y="461.7" font-size="4.8" fill="#fff" font-weight="bold" font-family="Liberation Sans" textLength="27" lengthAdjust="spacingAndGlyphs">Редагування</text><path d="M223 459 l1.5 1.5 l1.5 -1.5" stroke="#fff" stroke-width="0.7" fill="none" /><path d="M238 460 a2 2 0 1 1 2 2" stroke="#9fc7ef" stroke-width="0.8" fill="none" /><path d="M255 460 a2 2 0 1 0 -2 2" stroke="#9fc7ef" stroke-width="0.8" fill="none" /><path d="M265 462 h6 a2 2 0 0 0 0 -3.5 a2.5 2.5 0 0 0 -5 0.5 a1.5 1.5 0 0 0 -1 3z" stroke="#dbe6ff" stroke-width="0.7" fill="none" /><text  x="281" y="461.7" font-size="4.8" fill="#fff" font-weight="bold" font-family="Liberation Sans" textLength="5" lengthAdjust="spacingAndGlyphs">р...</text><circle cx="297" cy="460" r="1" fill="#f7c948" /><text  x="300" y="461.7" font-size="4.8" fill="#fff" font-weight="bold" font-family="Liberation Sans" textLength="14.5" lengthAdjust="spacingAndGlyphs">Спро...</text><circle cx="327.3" cy="460" r="4.8" fill="#5a3428" /><rect x="326.9" y="457.5" width="0.9" height="5" fill="#fff"/><text  x="334.5" y="462" font-size="5.5" fill="#ddd" font-weight="normal" font-family="Liberation Sans">+</text><path d="M348 463 l2 -5 l2 5z M347.5 463.3 h5" stroke="#e6e0ff" stroke-width="0.7" fill="none" /><circle cx="362.8" cy="460" r="2.6" fill="none" stroke="#fff" stroke-width="0.8"/><rect x="372.5" y="457.5" width="5.5" height="4.5" fill="none" rx="1" stroke="#fff" stroke-width="0.8"/><text  x="382" y="461.7" font-size="4.8" fill="#fff" font-weight="bold" font-family="Liberation Sans" textLength="24" lengthAdjust="spacingAndGlyphs">Презентація</text><rect x="107.5" y="473.8" width="5" height="5.6" rx="1.2" stroke="#666" stroke-width="0.6" fill="none"/><path d="M110 473.8 v5.6" stroke="#666" stroke-width="0.6" fill="none"/><text text-anchor="middle" x="110" y="483.6" font-size="3.6" fill="#777" font-weight="normal" font-family="Liberation Sans">Дизайн</text><circle cx="108.7" cy="495.3" r="1.1" stroke="#666" stroke-width="0.6" fill="none"/><rect x="110.3" y="494.20000000000005" width="2.2" height="2.2" stroke="#666" stroke-width="0.6" fill="none"/><rect x="107.6" y="496.90000000000003" width="2.2" height="2.2" stroke="#666" stroke-width="0.6" fill="none"/><circle cx="111.4" cy="498.0" r="1.1" stroke="#666" stroke-width="0.6" fill="none"/><text text-anchor="middle" x="110" y="503.6" font-size="3.6" fill="#777" font-weight="normal" font-family="Liberation Sans">Елементи</text><path d="M107.5 514.1 h5 M110 514.1 v5.5 M109 519.6 h2" stroke="#666" stroke-width="0.6" fill="none"/><text text-anchor="middle" x="110" y="523.6" font-size="3.6" fill="#777" font-weight="normal" font-family="Liberation Sans">Текст</text><path d="M107.5 539.1 v-2 a2.5 2.5 0 0 1 5 0 v2z" stroke="#666" stroke-width="0.6" fill="none"/><text text-anchor="middle" x="110" y="543.6" font-size="3.6" fill="#777" font-weight="normal" font-family="Liberation Sans">Бренд</text><path d="M107.2 558.5 a1.8 1.8 0 0 1 0.5 -3.5 a2.5 2.5 0 0 1 4.8 0 a1.8 1.8 0 0 1 0.3 3.5z" stroke="#666" stroke-width="0.6" fill="none"/><text text-anchor="middle" x="110" y="563.5" font-size="3.6" fill="#777" font-weight="normal" font-family="Liberation Sans">Передані</text><path d="M107.5 579.0 l4 -4 l1 1 l-4 4z M107.5 579.5 h5" stroke="#666" stroke-width="0.6" fill="none"/><circle cx="114" cy="533.5" r="1.2" fill="#f7b928" /><rect x="102" y="584.5" width="20" height="0.5" fill="#ddd"/><circle cx="109.6" cy="596" r="5" fill="#fff" stroke="#8a7af0" stroke-width="0.8"/><path d="M107 594 l5 4 M112 594 l-5 4" stroke="#3a5ad8" stroke-width="0.9" fill="none" /><rect x="214" y="468.5" width="144" height="103" fill="#f6f6f6"/><rect x="223.9" y="478.6" width="31.5" height="1.6" fill="#f0c040"/><rect x="223.3" y="473" width="31.5" height="6.8" fill="#ffffff" stroke="#222" stroke-width="0.55"/><text text-anchor="middle" x="239.05" y="477.7" font-size="3.8" fill="#222" font-weight="normal" font-family="Liberation Sans">Глибина різання</text><rect x="223.9" y="513.0999999999999" width="31.5" height="1.6" fill="#f0c040"/><rect x="223.3" y="507.5" width="31.5" height="6.8" fill="#ffffff" stroke="#222" stroke-width="0.55"/><text text-anchor="middle" x="239.05" y="512.1999999999999" font-size="3.8" fill="#222" font-weight="normal" font-family="Liberation Sans">Подача</text><rect x="223.9" y="548.3" width="31.5" height="1.6" fill="#f0c040"/><rect x="223.3" y="542.5" width="31.5" height="7" fill="#ffffff" stroke="#222" stroke-width="0.55"/><text text-anchor="middle" x="239.05" y="547.3" font-size="3.8" fill="#222" font-weight="normal" font-family="Liberation Sans">Швидкість різання</text><rect x="319.6" y="478.8" width="31" height="1.6" fill="#f0c040"/><rect x="319" y="472.5" width="31" height="7.5" fill="#ffffff" stroke="#222" stroke-width="0.55"/><text text-anchor="middle" x="334.5" y="477.55" font-size="3.3" fill="#222" font-weight="normal" font-family="Liberation Sans">Частота обертів</text><rect x="319.6" y="513.3" width="32" height="1.6" fill="#f0c040"/><rect x="319" y="507" width="32" height="7.5" fill="#ffffff" stroke="#222" stroke-width="0.55"/><text text-anchor="middle" x="335.0" y="512.05" font-size="2.8" fill="#222" font-weight="normal" font-family="Liberation Sans">Частота обертів шпинделя</text><rect x="319.6" y="549.3" width="31" height="1.6" fill="#f0c040"/><rect x="319" y="543" width="31" height="7.5" fill="#ffffff" stroke="#222" stroke-width="0.55"/><text text-anchor="middle" x="334.5" y="548.05" font-size="3.3" fill="#222" font-weight="normal" font-family="Liberation Sans">Швидкість різання</text><rect x="223.5" y="483.0" width="30" height="0.7" fill="#888" opacity="0.45"/><rect x="224.5" y="485.1" width="28" height="0.7" fill="#888" opacity="0.45"/><rect x="223.5" y="487.2" width="30" height="0.7" fill="#888" opacity="0.45"/><rect x="225.5" y="489.3" width="26" height="0.7" fill="#888" opacity="0.45"/><rect x="231.5" y="491.4" width="14" height="0.7" fill="#888" opacity="0.45"/><rect x="221.5" y="517.5" width="34" height="0.7" fill="#888" opacity="0.45"/><rect x="221.5" y="519.6" width="34" height="0.7" fill="#888" opacity="0.45"/><rect x="222.5" y="521.7" width="32" height="0.7" fill="#888" opacity="0.45"/><rect x="221.5" y="523.8" width="34" height="0.7" fill="#888" opacity="0.45"/><rect x="224.5" y="525.9" width="28" height="0.7" fill="#888" opacity="0.45"/><rect x="224.5" y="551.5" width="28" height="0.7" fill="#888" opacity="0.45"/><rect x="223.5" y="553.6" width="30" height="0.7" fill="#888" opacity="0.45"/><rect x="228.5" y="555.7" width="20" height="0.7" fill="#888" opacity="0.45"/><rect x="320.5" y="482.0" width="28" height="0.7" fill="#888" opacity="0.45"/><rect x="319.5" y="484.1" width="30" height="0.7" fill="#888" opacity="0.45"/><rect x="323.5" y="486.2" width="22" height="0.7" fill="#888" opacity="0.45"/><rect x="318.5" y="520.5" width="32" height="0.7" fill="#888" opacity="0.45"/><rect x="321.5" y="522.6" width="26" height="0.7" fill="#888" opacity="0.45"/><rect x="320.5" y="551.5" width="28" height="0.7" fill="#888" opacity="0.45"/><rect x="319.5" y="553.6" width="30" height="0.7" fill="#888" opacity="0.45"/><rect x="321.5" y="555.7" width="26" height="0.7" fill="#888" opacity="0.45"/><path d="M264 506 q5 -1.5 10 0 q6 1.5 12 0 q6 -1.5 12 0 q6 1 9 -0.5 v22 q-6 1.5 -12 0 q-6 -1.5 -12 0 q-6 1.5 -12 0 q-4 -1 -7 0.5z" stroke="#222" stroke-width="0.9" fill="#fff" /><path d="M266 508 h40 v18 h-40z" stroke="#333" stroke-width="0.4" fill="none" /><text font-family="Liberation Mono" x="272" y="516" font-size="5.4" fill="#222" font-weight="normal" font-family="Liberation Sans" textLength="28" lengthAdjust="spacingAndGlyphs">РЕЖИМИ</text><text font-family="Liberation Mono" x="273" y="523.5" font-size="5.4" fill="#222" font-weight="normal" font-family="Liberation Sans" textLength="26" lengthAdjust="spacingAndGlyphs">РІЗАННЯ</text><path d="M287.5 474 a6 6 0 0 1 4 10.5 v3 h-8 v-3 a6 6 0 0 1 4 -10.5z" stroke="#222" stroke-width="0.7" fill="#f6f6f6" /><path d="M286 481 l1.5 2 l1.5 -2" stroke="#222" stroke-width="0.4" fill="none" /><rect x="284" y="487.5" width="7" height="3.5" fill="#111" rx="1"/><path d="M280 471 l1.5 1.5 M295 471 l-1.5 1.5 M287.5 469 v2 M277.5 477 h2 M296 477 h2" stroke="#222" stroke-width="0.6" fill="none" /><path d="M268 500 q-6 -10 -14 -11 M254 489 l1.5 -1.5 M254 489 l2 0.5 M268 500 q4 2 2 -3 q-2 -3 -4 1" stroke="#222" stroke-width="0.6" fill="none" /><path d="M305 500 q6 -10 14 -12 M319 488 l-2 0 M319 488 l-1 1.5 M305 500 q-4 2 -2 -3 q2 -3 4 1" stroke="#222" stroke-width="0.6" fill="none" /><path d="M266 533 q-4 10 -12 12 M254 545 l2 0 M254 545 l0.5 -2 M266 533 q4 -2 0 -4 q-3 -1 -1 3" stroke="#222" stroke-width="0.6" fill="none" /><path d="M306 533 q4 10 12 12 M318 545 l-2 0 M318 545 l-0.5 -2 M306 533 q-4 -2 0 -4 q3 -1 1 3" stroke="#222" stroke-width="0.6" fill="none" /><path d="M263 518 h-6 M257 518 l1.5 -1.2 M257 518 l1.5 1.2 M310 518 h6 M316 518 l-1.5 -1.2 M316 518 l-1.5 1.2 M286.5 529 v13 M286.5 542 l-1.2 -1.5 M286.5 542 l1.2 -1.5" stroke="#222" stroke-width="0.6" fill="none" /><rect x="267.5" y="547" width="37" height="17.5" fill="#fff" stroke="#222" stroke-width="0.6"/><rect x="268" y="563.5" width="37" height="1.5" fill="#f0c040"/><rect x="271.0" y="551.0" width="30" height="0.8" fill="#333" opacity="0.6"/><rect x="271.0" y="554.4" width="30" height="0.8" fill="#333" opacity="0.6"/><rect x="274.0" y="557.8" width="24" height="0.8" fill="#333" opacity="0.6"/><rect x="281.0" y="561.2" width="10" height="0.8" fill="#333" opacity="0.6"/><circle cx="287" cy="544.5" r="3.8" fill="#f5c84a" stroke="#222" stroke-width="0.5"/><text text-anchor="middle" x="287" y="546.3" font-size="4.5" fill="#222" font-weight="bold" font-family="Liberation Sans">?</text><path d="M218 494 l6 6 M218 494 l-1 -2 l2 1z" stroke="#333" stroke-width="1" fill="none" /><text  x="217" y="566" font-size="4" fill="#333" font-weight="normal" font-family="Liberation Sans">ı1</text><path d="M352 532 l3 -3 l1 3 l2 -2" stroke="#333" stroke-width="0.5" fill="none" /><rect x="261.5" y="573.2" width="23.8" height="18.2" fill="#f8f8f8" rx="1.5" stroke="#bbb" stroke-width="0.5"/><rect x="270" y="579.5" width="7" height="4" fill="none" stroke="#666" stroke-width="0.4"/><rect x="263.5" y="577.5" width="6" height="1.2" fill="#aaa"/><rect x="277.5" y="577.5" width="6" height="1.2" fill="#aaa"/><rect x="263.5" y="581.5" width="6" height="1.2" fill="#aaa"/><rect x="277.5" y="581.5" width="6" height="1.2" fill="#aaa"/><rect x="263.5" y="585.5" width="6" height="1.2" fill="#aaa"/><rect x="277.5" y="585.5" width="6" height="1.2" fill="#aaa"/><circle cx="273.5" cy="587" r="1.2" fill="#f5c84a" /><rect x="289.5" y="574" width="21.8" height="17.4" fill="#e3e3ea" rx="1.5"/><text text-anchor="middle" x="300.4" y="585" font-size="7" fill="#444" font-weight="normal" font-family="Liberation Sans">+</text><path d="M117 603 l3 -3 M117 600.5 h2" stroke="#333" stroke-width="0.6" fill="none" /><text  x="124" y="602.5" font-size="4.2" fill="#222" font-weight="bold" font-family="Liberation Sans">Примітки</text><rect x="156" y="598.5" width="4" height="3" fill="none" stroke="#333" stroke-width="0.5"/><text  x="161" y="602.5" font-size="4.2" fill="#222" font-weight="bold" font-family="Liberation Sans">Тривалість</text><circle cx="194.5" cy="600.8" r="1.6" fill="none" stroke="#333" stroke-width="0.5"/><text  x="198" y="602.5" font-size="4.2" fill="#222" font-weight="bold" font-family="Liberation Sans">Таймер</text><text  x="300.7" y="602.5" font-size="4.2" fill="#222" font-weight="bold" font-family="Liberation Sans">Сторінка 1 з 1</text><rect x="331.5" y="600.5" width="55" height="0.8" fill="#c8c8d0"/><circle cx="354.7" cy="601" r="2.3" fill="#fff" stroke="#ccc" stroke-width="0.4"/><text  x="394" y="602.5" font-size="4.2" fill="#222" font-weight="bold" font-family="Liberation Sans">50%</text><rect x="100" y="606.2" width="353" height="10.8" fill="#2b2622"/><rect x="104.5" y="609" width="3" height="2.5" fill="#eee"/><rect x="108" y="609" width="3" height="2.5" fill="#eee"/><rect x="104.5" y="612" width="3" height="2.5" fill="#eee"/><rect x="108" y="612" width="3" height="2.5" fill="#eee"/><rect x="113.2" y="606.2" width="78.4" height="10.8" fill="#f2f2f2"/><circle cx="118.5" cy="611" r="1.5" fill="none" stroke="#555" stroke-width="0.5"/><text  x="122" y="613" font-size="4" fill="#555" font-weight="normal" font-family="Liberation Sans">Поиск</text><path d="M177 611.5 l1.5 -3 l1.5 3 l3 1 l-3 1 l-1.5 3 l-1.5 -3 l-3 -1z" stroke="none" stroke-width="1" fill="#f5c518" /><circle cx="184.5" cy="609" r="0.8" fill="#f59" /><rect x="197" y="609" width="4" height="4" fill="none" stroke="#aaa" stroke-width="0.5"/><circle cx="213" cy="611.5" r="3.3" fill="#1f8fd8" /><rect x="222" y="606.2" width="10" height="10.8" fill="#4a4440"/><circle cx="227" cy="611.5" r="3.2" fill="#e0452b" /><circle cx="227" cy="611.5" r="1.3" fill="#2b75e0" /><rect x="237" y="609" width="6" height="5" fill="#f3b82d"/><circle cx="254" cy="611.5" r="3.2" fill="#7a4fd8" /><circle cx="268" cy="611.5" r="3.2" fill="#d24625" /><rect x="349" y="608.3" width="13.3" height="6.5" fill="#2ea043" stroke="#bfe" stroke-width="0.5"/><text  x="350.5" y="613.3" font-size="3.6" fill="#fff" font-weight="normal" font-family="Liberation Sans">100%</text><rect x="366" y="609.5" width="3" height="3" fill="#ccc" opacity="0.7"/><rect x="372" y="609.5" width="3" height="3" fill="#ccc" opacity="0.7"/><rect x="378" y="609.5" width="3" height="3" fill="#ccc" opacity="0.7"/><rect x="384" y="609.5" width="3" height="3" fill="#ccc" opacity="0.7"/><rect x="390" y="609.5" width="3" height="3" fill="#ccc" opacity="0.7"/><rect x="396" y="609.5" width="3" height="3" fill="#ccc" opacity="0.7"/><rect x="402" y="609.5" width="3" height="3" fill="#ccc" opacity="0.7"/><text  x="420" y="616.5" font-size="3.2" fill="#ddd" font-weight="normal" font-family="Liberation Sans">31.01.2025</text></svg>
<svg class="a" style="left:410px;top:414.6px" width="353" height="198.69999999999993" viewBox="410 414.6 353 198.69999999999993"><defs><linearGradient id="cv4" x1="0" x2="1" y1="0" y2="0"><stop offset="0" stop-color="#0db8c6"/><stop offset="0.42" stop-color="#3a86d8"/><stop offset="0.72" stop-color="#5b5ee6"/><stop offset="1" stop-color="#7527e0"/></linearGradient><linearGradient id="cvlogo" x1="0" x2="1" y1="0" y2="0"><stop offset="0" stop-color="#10c4d0"/><stop offset="1" stop-color="#7a3ce8"/></linearGradient><pattern id="dots" width="3" height="3" patternUnits="userSpaceOnUse"><rect width="3" height="3" fill="#fbfbfb"/><rect x="1" y="1" width="0.6" height="0.6" fill="#e4e4e4"/></pattern></defs><rect x="410" y="414.6" width="353" height="198.69999999999993" fill="#f3f1f8"/><rect x="410" y="414.6" width="353" height="11.8" fill="#d3e3fd"/><rect x="411.5" y="416" width="7" height="7" fill="#e8f0fe" rx="1.5"/><path d="M413.5 418.5 l2 2 M415.5 418.5 l-2 2" stroke="#444" stroke-width="0.6" fill="none" /><rect x="422" y="418.5" width="3.5" height="3.5" fill="#d33" rx="0.5"/><text  x="427.5" y="422" font-size="3.6" fill="#555" font-weight="normal" font-family="Liberation Sans">Ограниченная любовь д...</text><path d="M469.5 419 l2 2 M471.5 419 l-2 2" stroke="#444" stroke-width="0.6" fill="none" /><rect x="477" y="418.5" width="3.5" height="3.5" fill="#d33" rx="0.5"/><text  x="482.5" y="422" font-size="3.6" fill="#555" font-weight="normal" font-family="Liberation Sans">Поиск на Etsy: заказ...</text><path d="M524.5 419 l2 2 M526.5 419 l-2 2" stroke="#444" stroke-width="0.6" fill="none" /><rect x="534" y="418.5" width="3.5" height="3.5" fill="#d33" rx="0.5"/><text  x="539.5" y="422" font-size="3.6" fill="#555" font-weight="normal" font-family="Liberation Sans">Завдання в принципе...</text><path d="M581.5 419 l2 2 M583.5 419 l-2 2" stroke="#444" stroke-width="0.6" fill="none" /><rect x="592" y="418.5" width="3.5" height="3.5" fill="#d33" rx="0.5"/><text  x="597.5" y="422" font-size="3.6" fill="#555" font-weight="normal" font-family="Liberation Sans">Стрим: Дефне дорого...</text><path d="M639.5 419 l2 2 M641.5 419 l-2 2" stroke="#444" stroke-width="0.6" fill="none" /><rect x="646.5" y="415.2" width="53.3" height="11.2" fill="#ffffff" rx="2"/><rect x="649.5" y="418.3" width="4" height="4" fill="#6a4be0" rx="0.8"/><text  x="656" y="422" font-size="3.6" fill="#333" font-weight="normal" font-family="Liberation Sans">ІК – Дошка - Canva</text><path d="M695 419 l2 2 M697 419 l-2 2" stroke="#444" stroke-width="0.6" fill="none" /><text  x="704" y="422.5" font-size="5" fill="#444" font-weight="normal" font-family="Liberation Sans">+</text><rect x="729" y="420" width="4" height="0.6" fill="#333"/><rect x="741.5" y="418.8" width="3.5" height="3.5" fill="none" stroke="#333" stroke-width="0.6"/><path d="M754.5 418.5 l3.5 3.5 M758 418.5 l-3.5 3.5" stroke="#333" stroke-width="0.6" fill="none" /><rect x="410" y="426.4" width="353" height="21.6" fill="#ffffff"/><path d="M413 431.9 h5 M413 431.9 l2 -2 M413 431.9 l2 2" stroke="#666" stroke-width="0.75" fill="none" /><path d="M423 431.9 h5 M428 431.9 l-2 -2 M428 431.9 l-2 2" stroke="#bbb" stroke-width="0.9" fill="none" /><circle cx="435.3" cy="431.9" r="2.0" fill="none" stroke="#666" stroke-width="0.75"/><rect x="443.3" y="427.8" width="271.5" height="8.3" fill="#eef1f7" rx="4.2"/><path d="M447 430.4 h3 M448 433.4 h3" stroke="#555" stroke-width="0.8" fill="none" /><text  x="452" y="433.4" font-size="4.2" fill="#666" font-weight="normal" font-family="Liberation Sans">canva.com/design/DAGcdXIMwpk/P6dxfZZVmllTam_ke0efBQ/edit</text><path d="M706.5 431 l1 -2.2 l1 2.2 l2.2 .3 l-1.7 1.5 l.5 2.2 l-2 -1.1 l-2 1.1 l.5 -2.2 l-1.7 -1.5z" stroke="#555" stroke-width="0.6" fill="none" /><circle cx="721.6" cy="431.9" r="2.4" fill="#e0202a" /><circle cx="721.6" cy="431.9" r="1.1" fill="#fff" /><rect x="729.5" y="429.4" width="5" height="5" fill="none" rx="1" stroke="#555" stroke-width="0.8"/><circle cx="746.2" cy="431.9" r="2.5" fill="#4a2a20" /><path d="M756.5 429.4 v0.1 M756.5 431.9 v0.1 M756.5 434.4 v0.1" stroke="#666" stroke-width="1" fill="none" stroke-linecap="round"/><rect x="414.5" y="440.3" width="3.5" height="3.5" fill="#666"/><rect x="427" y="440.6" width="3.6" height="2.8" fill="none" rx="0.4" stroke="#777" stroke-width="0.5"/><text  x="432.5" y="443.5" font-size="3.9" fill="#808080" font-weight="normal" font-family="Liberation Sans">Нова папка</text><rect x="456" y="440.6" width="3.6" height="2.8" fill="none" rx="0.4" stroke="#777" stroke-width="0.5"/><text  x="461.5" y="443.5" font-size="3.9" fill="#808080" font-weight="normal" font-family="Liberation Sans">Фото - Google Фото</text><rect x="499" y="440.6" width="3.6" height="2.8" fill="none" rx="0.4" stroke="#777" stroke-width="0.5"/><text  x="504.5" y="443.5" font-size="3.9" fill="#808080" font-weight="normal" font-family="Liberation Sans">Клануалка</text><rect x="527" y="440.6" width="3.6" height="2.8" fill="none" rx="0.4" stroke="#777" stroke-width="0.5"/><text  x="532.5" y="443.5" font-size="3.9" fill="#808080" font-weight="normal" font-family="Liberation Sans">Поповнення спілк...</text><rect x="569" y="440.6" width="3.6" height="2.8" fill="none" rx="0.4" stroke="#777" stroke-width="0.5"/><text  x="574.5" y="443.5" font-size="3.9" fill="#808080" font-weight="normal" font-family="Liberation Sans">Blogger: Викладач...</text><rect x="611" y="440.6" width="3.6" height="2.8" fill="none" rx="0.4" stroke="#777" stroke-width="0.5"/><text  x="616.5" y="443.5" font-size="3.9" fill="#808080" font-weight="normal" font-family="Liberation Sans">NEAR Crowd — Ear...</text><rect x="653" y="440.6" width="3.6" height="2.8" fill="none" rx="0.4" stroke="#777" stroke-width="0.5"/><text  x="658.5" y="443.5" font-size="3.9" fill="#808080" font-weight="normal" font-family="Liberation Sans">Комплекс самоосві...</text><text  x="720" y="443.6" font-size="4" fill="#777" font-weight="normal" font-family="Liberation Sans">»</text><rect x="732" y="440.4" width="4" height="3.2" fill="none" stroke="#777" stroke-width="0.6"/><text  x="738" y="443.6" font-size="3.9" fill="#8a8a8a" font-weight="normal" font-family="Liberation Sans">Усі закладки</text><rect x="410" y="448" width="20" height="154.8" fill="#f3f0fa"/><rect x="410" y="452" width="1.6" height="18" fill="#7d3cf0"/><path d="M417.5 460.5 v-2 a2.5 2.5 0 0 1 5 0 v2z" stroke="#666" stroke-width="0.6" fill="none"/><text text-anchor="middle" x="420" y="465.5" font-size="3.2" fill="#777" font-weight="normal" font-family="Liberation Sans">Головна</text><path d="M417.2 482.3 a1.8 1.8 0 0 1 0.5 -3.5 a2.5 2.5 0 0 1 4.8 0 a1.8 1.8 0 0 1 0.3 3.5z" stroke="#666" stroke-width="0.6" fill="none"/><text text-anchor="middle" x="420" y="487.8" font-size="3.2" fill="#777" font-weight="normal" font-family="Liberation Sans">Проєкти</text><rect x="417.5" y="499.8" width="5" height="5.6" rx="1.2" stroke="#666" stroke-width="0.6" fill="none"/><path d="M420 499.8 v5.6" stroke="#666" stroke-width="0.6" fill="none"/><text text-anchor="middle" x="420" y="510.1" font-size="3.2" fill="#777" font-weight="normal" font-family="Liberation Sans">Шаблони</text><path d="M417.5 527.4 v-2 a2.5 2.5 0 0 1 5 0 v2z" stroke="#666" stroke-width="0.6" fill="none"/><text text-anchor="middle" x="420" y="532.4" font-size="3.2" fill="#777" font-weight="normal" font-family="Liberation Sans">Бренд</text><circle cx="418.7" cy="545.9000000000001" r="1.1" stroke="#666" stroke-width="0.6" fill="none"/><rect x="420.3" y="544.8000000000001" width="2.2" height="2.2" stroke="#666" stroke-width="0.6" fill="none"/><rect x="417.6" y="547.5" width="2.2" height="2.2" stroke="#666" stroke-width="0.6" fill="none"/><circle cx="421.4" cy="548.6" r="1.1" stroke="#666" stroke-width="0.6" fill="none"/><text text-anchor="middle" x="420" y="554.7" font-size="3.2" fill="#777" font-weight="normal" font-family="Liberation Sans">Додатки</text><path d="M417.5 572.0 l4 -4 l1 1 l-4 4z M417.5 572.5 h5" stroke="#666" stroke-width="0.6" fill="none"/><text text-anchor="middle" x="420" y="577.0" font-size="3.2" fill="#777" font-weight="normal" font-family="Liberation Sans">Лабораторі...</text><circle cx="423.5" cy="520" r="0.9" fill="#f7b928" /><rect x="430" y="448" width="70" height="154.8" fill="#f6f4fb"/><text font-style="italic" font-family="Liberation Serif" x="431.5" y="462.5" font-size="8.4" fill="url(#cvlogo)" font-weight="normal" font-family="Liberation Sans">Canva</text><rect x="431.5" y="466" width="63.7" height="10.4" fill="#8b3dff" rx="2"/><text text-anchor="middle" x="463" y="473.2" font-size="4.3" fill="#fff" font-weight="bold" font-family="Liberation Sans">+  Створити дизайн</text><rect x="431.5" y="478" width="63.7" height="17" fill="#ffffff" rx="2"/><circle cx="436" cy="487" r="0.9" fill="#f7b928" /><text text-anchor="middle" x="466" y="485.3" font-size="4.0" fill="#333" font-weight="normal" font-family="Liberation Sans">Спробувати Pro</text><text text-anchor="middle" x="466" y="491.6" font-size="4.0" fill="#333" font-weight="normal" font-family="Liberation Sans">протягом 30 днів</text><text  x="432.5" y="503.5" font-size="3.4" fill="#777" font-weight="normal" font-family="Liberation Sans">Нещодавні дизайни</text><rect x="435" y="511.0" width="5" height="5" fill="#cfc8b8" opacity="0.8"/><text  x="443" y="515.5" font-size="4.0" fill="#444" font-weight="normal" font-family="Liberation Sans">режими різання</text><rect x="435" y="522.8" width="5" height="5" fill="#cfc8b8" opacity="0.8"/><text  x="443" y="527.3" font-size="4.0" fill="#444" font-weight="normal" font-family="Liberation Sans">Робота в програмі</text><rect x="435" y="534.6" width="5" height="5" fill="#cfc8b8" opacity="0.8"/><text  x="443" y="539.1" font-size="4.0" fill="#444" font-weight="normal" font-family="Liberation Sans">Робота</text><rect x="435" y="546.4" width="5" height="5" fill="#cfc8b8" opacity="0.8"/><text  x="443" y="550.9" font-size="4.0" fill="#444" font-weight="normal" font-family="Liberation Sans">Приклад рефлексії</text><rect x="435" y="558.2" width="5" height="5" fill="#cfc8b8" opacity="0.8"/><text  x="443" y="562.7" font-size="4.0" fill="#444" font-weight="normal" font-family="Liberation Sans">Lorem ipsum dolor si...</text><rect x="431" y="567.0" width="62" height="11.5" fill="#e7e0f8" rx="1.5"/><rect x="435" y="570.0" width="5" height="5" fill="#cfc8b8" opacity="0.8"/><text  x="443" y="574.5" font-size="4.0" fill="#6a4bd0" font-weight="normal" font-family="Liberation Sans">ІК</text><rect x="437" y="581" width="25" height="0.8" fill="#8a6ae8" opacity="0.7"/><rect x="435" y="590" width="4" height="5" fill="none" stroke="#555" stroke-width="0.6"/><text  x="443" y="594.5" font-size="4.0" fill="#444" font-weight="normal" font-family="Liberation Sans">Кошик</text><rect x="497" y="500" width="1.4" height="80" fill="#bdbdbd"/><rect x="499.8" y="450.4" width="260" height="155" fill="url(#dots)" rx="3"/><path d="M499.8 465.4 v-12 a3 3 0 0 1 3 -3 h254 a3 3 0 0 1 3 3 v12z" stroke="none" stroke-width="1" fill="url(#cv4)" /><rect x="507.5" y="455" width="5" height="5" fill="none" stroke="#cfe" stroke-width="0.6"/><text  x="522" y="460" font-size="4.8" fill="#fff" font-weight="bold" font-family="Liberation Sans">Файл</text><circle cx="539" cy="457.8" r="1" fill="#f7c948" /><text  x="542" y="460" font-size="4.8" fill="#fff" font-weight="bold" font-family="Liberation Sans">Змінити розмір</text><path d="M589 458 a2 2 0 1 1 2 2" stroke="#9fc7ef" stroke-width="0.8" fill="none" /><path d="M606 458 a2 2 0 1 0 -2 2" stroke="#9fc7ef" stroke-width="0.8" fill="none" /><path d="M617 460 h6 a2 2 0 0 0 0 -3.5 a2.5 2.5 0 0 0 -5 0.5 a1.5 1.5 0 0 0 -1 3z" stroke="#dbe6ff" stroke-width="0.7" fill="none" /><circle cx="633" cy="457.8" r="1" fill="#f7c948" /><text  x="636" y="460" font-size="4.8" fill="#fff" font-weight="bold" font-family="Liberation Sans">Спро...</text><circle cx="663.4" cy="457.8" r="4.8" fill="#5a3428" /><rect x="663" y="455.3" width="0.9" height="5" fill="#fff"/><text  x="670.5" y="460" font-size="5.5" fill="#ddd" font-weight="normal" font-family="Liberation Sans">+</text><path d="M684 461 l2 -5 l2 5z M683.5 461.3 h5" stroke="#e6e0ff" stroke-width="0.7" fill="none" /><circle cx="699" cy="457.8" r="2.6" fill="none" stroke="#fff" stroke-width="0.8"/><rect x="707.1" y="453" width="37.7" height="10" fill="#f5efff" rx="2"/><path d="M710 459 v1.8 h4 v-1.8 M712 460 v-4 l-1.2 1.2 M712 456 l1.2 1.2" stroke="#333" stroke-width="0.7" fill="none" /><text  x="717" y="460" font-size="4.6" fill="#222" font-weight="bold" font-family="Liberation Sans">Поділитися</text><path d="M750.5 455.8 l4 4 M754.5 455.8 l-4 4" stroke="#fff" stroke-width="0.8" fill="none" /><text  x="527.1" y="486.5" font-size="8" fill="#111" font-weight="bold" font-family="Liberation Sans" textLength="48" lengthAdjust="spacingAndGlyphs">Кейс картка</text><text  x="513.7" y="501.5" font-size="6.8" fill="#111" font-weight="bold" font-family="Liberation Sans" textLength="78" lengthAdjust="spacingAndGlyphs">Технологічний процес</text><text  x="530" y="509.7" font-size="6.8" fill="#111" font-weight="bold" font-family="Liberation Sans" textLength="44" lengthAdjust="spacingAndGlyphs">обробки деталі</text><text  x="540" y="518" font-size="6.8" fill="#111" font-weight="bold" font-family="Liberation Sans" textLength="26" lengthAdjust="spacingAndGlyphs">"Стакан"</text><text  x="511.6" y="536.2" font-size="5.4" fill="#111" font-weight="bold" font-family="Liberation Sans" textLength="26" lengthAdjust="spacingAndGlyphs">Завдання:</text><text  x="511.6" y="542.5" font-size="5.4" fill="#111" font-weight="bold" font-family="Liberation Sans" textLength="48" lengthAdjust="spacingAndGlyphs">1.Створити дві групи.</text><text  x="511.6" y="548.8000000000001" font-size="5.4" fill="#111" font-weight="bold" font-family="Liberation Sans" textLength="79" lengthAdjust="spacingAndGlyphs">2.Уважно вивчити матеріал кейсу.</text><text  x="511.6" y="555.1" font-size="5.4" fill="#111" font-weight="bold" font-family="Liberation Sans" textLength="53" lengthAdjust="spacingAndGlyphs">3.Обговорити вивчену</text><text  x="511.6" y="561.4000000000001" font-size="5.4" fill="#111" font-weight="bold" font-family="Liberation Sans" textLength="30" lengthAdjust="spacingAndGlyphs">інформацію.</text><text  x="511.6" y="567.7" font-size="5.4" fill="#111" font-weight="bold" font-family="Liberation Sans" textLength="80" lengthAdjust="spacingAndGlyphs">4.Виробити рішення поставленого</text><text  x="511.6" y="574.0" font-size="5.4" fill="#111" font-weight="bold" font-family="Liberation Sans" textLength="24" lengthAdjust="spacingAndGlyphs">завдання.</text><rect x="602.2" y="474.2" width="73" height="67.8" fill="#fdfdfd" stroke="#b8b8b8" stroke-width="0.7"/><rect x="602.2" y="474.2" width="73" height="8.5" fill="#c9e7bb"/><circle cx="605.2" cy="478.4" r="0.9" fill="#e06060" /><circle cx="607.7" cy="478.4" r="0.9" fill="#e0b040" /><circle cx="610.2" cy="478.4" r="0.9" fill="#60b060" /><rect x="616.8000000000001" y="476.4" width="45.26" height="1.1" fill="#333" opacity="0.6"/><rect x="625.5600000000001" y="479.2" width="25.549999999999997" height="1.1" fill="#333" opacity="0.6"/><rect x="613" y="483.5" width="55" height="57" fill="#d3efc5"/><rect x="613" y="483.3" width="55" height="57" fill="none" stroke="#9b7fe0" stroke-width="0.9"/><rect x="677.9" y="474.2" width="71" height="67.8" fill="#fdfdfd" stroke="#b8b8b8" stroke-width="0.7"/><rect x="677.9" y="474.2" width="71" height="8.5" fill="#fbf0a6"/><circle cx="680.9" cy="478.4" r="0.9" fill="#e06060" /><circle cx="683.4" cy="478.4" r="0.9" fill="#e0b040" /><circle cx="685.9" cy="478.4" r="0.9" fill="#60b060" /><rect x="692.1" y="476.4" width="44.02" height="1.1" fill="#333" opacity="0.6"/><rect x="700.62" y="479.2" width="24.849999999999998" height="1.1" fill="#333" opacity="0.6"/><rect x="684" y="483.5" width="56" height="55" fill="#d3efc5"/><rect x="615" y="486.0" width="18" height="1.1" fill="#444" opacity="0.55"/><rect x="615" y="490.1" width="25" height="1.1" fill="#444" opacity="0.55"/><rect x="615" y="494.2" width="38" height="1.1" fill="#444" opacity="0.55"/><rect x="615" y="498.3" width="40" height="1.1" fill="#444" opacity="0.55"/><rect x="615" y="502.4" width="36" height="1.1" fill="#444" opacity="0.55"/><rect x="615" y="506.5" width="40" height="1.1" fill="#444" opacity="0.55"/><rect x="615" y="510.6" width="38" height="1.1" fill="#444" opacity="0.55"/><rect x="615" y="514.7" width="34" height="1.1" fill="#444" opacity="0.55"/><rect x="615" y="518.8" width="32" height="1.1" fill="#444" opacity="0.55"/><rect x="615" y="522.9" width="26" height="1.1" fill="#444" opacity="0.55"/><rect x="615" y="527.0" width="25" height="1.1" fill="#444" opacity="0.55"/><rect x="615" y="531.1" width="40" height="1.1" fill="#444" opacity="0.55"/><rect x="615" y="535.2" width="24" height="1.1" fill="#444" opacity="0.55"/><rect x="686" y="486.0" width="18" height="1.1" fill="#444" opacity="0.55"/><rect x="686" y="490.1" width="25" height="1.1" fill="#444" opacity="0.55"/><rect x="686" y="494.2" width="38" height="1.1" fill="#444" opacity="0.55"/><rect x="686" y="498.3" width="40" height="1.1" fill="#444" opacity="0.55"/><rect x="686" y="502.4" width="36" height="1.1" fill="#444" opacity="0.55"/><rect x="686" y="506.5" width="40" height="1.1" fill="#444" opacity="0.55"/><rect x="686" y="510.6" width="38" height="1.1" fill="#444" opacity="0.55"/><rect x="686" y="514.7" width="34" height="1.1" fill="#444" opacity="0.55"/><rect x="686" y="518.8" width="32" height="1.1" fill="#444" opacity="0.55"/><rect x="686" y="522.9" width="26" height="1.1" fill="#444" opacity="0.55"/><rect x="686" y="527.0" width="25" height="1.1" fill="#444" opacity="0.55"/><rect x="686" y="531.1" width="40" height="1.1" fill="#444" opacity="0.55"/><rect x="686" y="535.2" width="24" height="1.1" fill="#444" opacity="0.55"/><rect x="602.2" y="546.6" width="147" height="33.5" fill="#fdfdfd" stroke="#d0a0a0" stroke-width="0.7"/><rect x="602.2" y="546.6" width="147" height="7" fill="#f3a292"/><circle cx="605.5" cy="550" r="0.9" fill="#e06060" /><circle cx="608" cy="550" r="0.9" fill="#e0b040" /><circle cx="610.5" cy="550" r="0.9" fill="#60b060" /><text  x="615" y="552.3" font-size="4.4" fill="#111" font-weight="bold" font-family="Liberation Sans" textLength="73" lengthAdjust="spacingAndGlyphs">Як виконувати завдання кейс вправи?</text><rect x="608" y="558.4" width="135" height="18.3" fill="#f7a593"/><rect x="610" y="561.0" width="100" height="1" fill="#7a2a20" opacity="0.55"/><rect x="610" y="564.9" width="102" height="1" fill="#7a2a20" opacity="0.55"/><rect x="610" y="568.8" width="60" height="1" fill="#7a2a20" opacity="0.55"/><rect x="610" y="572.7" width="78" height="1" fill="#7a2a20" opacity="0.55"/><path d="M511 597.5 l3 -3 M511 595 h2" stroke="#333" stroke-width="0.6" fill="none" /><text  x="516" y="597" font-size="4.2" fill="#222" font-weight="bold" font-family="Liberation Sans">Примітки</text><circle cx="543" cy="595.3" r="1.6" fill="none" stroke="#333" stroke-width="0.5"/><text  x="547" y="597" font-size="4.2" fill="#222" font-weight="bold" font-family="Liberation Sans">Таймер</text><text  x="608" y="597" font-size="4.2" fill="#222" font-weight="bold" font-family="Liberation Sans">Сторінка 1 з 1</text><rect x="639" y="595.3" width="55" height="0.8" fill="#c8c8d0"/><circle cx="665" cy="595.5" r="2.3" fill="#fff" stroke="#ccc" stroke-width="0.4"/><text  x="705" y="597" font-size="4.2" fill="#222" font-weight="bold" font-family="Liberation Sans">21%</text><rect x="718" y="592.5" width="5" height="5" fill="none" stroke="#444" stroke-width="0.6"/><rect x="729" y="592.5" width="5" height="5" fill="none" stroke="#444" stroke-width="0.6"/><path d="M740 598 l5 -5" stroke="#444" stroke-width="0.8" fill="none" /><circle cx="755" cy="595.5" r="2.6" fill="none" stroke="#444" stroke-width="0.6"/><rect x="410" y="602.8" width="353" height="10.5" fill="#2b2622"/><rect x="413.5" y="605.5" width="3" height="2.5" fill="#eee"/><rect x="417" y="605.5" width="3" height="2.5" fill="#eee"/><rect x="413.5" y="608.5" width="3" height="2.5" fill="#eee"/><rect x="417" y="608.5" width="3" height="2.5" fill="#eee"/><rect x="423" y="602.8" width="83" height="10.5" fill="#f2f2f2"/><circle cx="428" cy="607.5" r="1.5" fill="none" stroke="#555" stroke-width="0.5"/><text  x="432" y="609.5" font-size="4" fill="#555" font-weight="normal" font-family="Liberation Sans">Поиск</text><path d="M484 608 l1.5 -3 l1.5 3 l3 1 l-3 1 l-1.5 3 l-1.5 -3 l-3 -1z" stroke="none" stroke-width="1" fill="#f5c518" /><circle cx="492" cy="605.5" r="0.8" fill="#f59" /><rect x="509" y="606" width="4" height="4" fill="none" stroke="#aaa" stroke-width="0.5"/><circle cx="521" cy="608" r="3.3" fill="#1f8fd8" /><rect x="529" y="602.8" width="10" height="10.5" fill="#4a4440"/><circle cx="534" cy="608" r="3.2" fill="#e0452b" /><circle cx="534" cy="608" r="1.3" fill="#2b75e0" /><rect x="544" y="605.5" width="6" height="5" fill="#f3b82d"/><circle cx="559" cy="608" r="3.2" fill="#7a4fd8" /><circle cx="573" cy="608" r="3.2" fill="#d24625" /><rect x="658.8" y="605" width="13" height="6.5" fill="#2ea043" stroke="#bfe" stroke-width="0.5"/><text  x="660.3" y="610" font-size="3.6" fill="#fff" font-weight="normal" font-family="Liberation Sans">100%</text><rect x="676" y="606.3" width="3" height="3" fill="#ccc" opacity="0.7"/><rect x="682" y="606.3" width="3" height="3" fill="#ccc" opacity="0.7"/><rect x="688" y="606.3" width="3" height="3" fill="#ccc" opacity="0.7"/><rect x="694" y="606.3" width="3" height="3" fill="#ccc" opacity="0.7"/><rect x="700" y="606.3" width="3" height="3" fill="#ccc" opacity="0.7"/><rect x="706" y="606.3" width="3" height="3" fill="#ccc" opacity="0.7"/><rect x="712" y="606.3" width="3" height="3" fill="#ccc" opacity="0.7"/><text  x="722" y="610" font-size="3.6" fill="#ddd" font-weight="normal" font-family="Liberation Sans">ENG</text><text text-anchor="middle" x="743" y="607" font-size="3.2" fill="#ddd" font-weight="normal" font-family="Liberation Sans">14:47</text><text text-anchor="middle" x="743" y="611.5" font-size="3.2" fill="#ddd" font-weight="normal" font-family="Liberation Sans">31.01.2025</text><rect x="754" y="605" width="5" height="4.5" fill="#eee"/></svg>
<!--/SS-->
<div class="a" style="left:6px;top:627px;width:1073px;height:15px;background:#f0f0f0"></div>
<div class="a" style="left:12px;top:631px;font-size:7.2px;line-height:9px;color:#444;white-space:nowrap">Слайд 12 з 16</div>
<svg class="a" style="left:890px;top:627px" width="189" height="15" viewBox="890 627 189 15">
<circle cx="902.5" cy="634.5" r="4.3" fill="none" stroke="#777" stroke-width="0.9"/><path d="M903.8 632.3 L900.8 634.5 L903.8 636.7Z" fill="#777"/>
<rect x="921.5" y="630" width="6" height="9" fill="none" stroke="#777" stroke-width="0.9"/><path d="M923 631.5 h3 M923 633.5 h3 M923 635.5 h3 M923 637.5 h3" stroke="#777" stroke-width="0.7"/>
<circle cx="947" cy="634.5" r="4.3" fill="none" stroke="#777" stroke-width="0.9"/><path d="M945.7 632.3 L948.7 634.5 L945.7 636.7Z" fill="#777"/>
<rect x="975.5" y="630.5" width="9" height="8" fill="none" stroke="#888" stroke-width="0.9"/><path d="M978 632.5 v5 M979.5 632.5 h4 M979.5 634.5 h4" stroke="#888" stroke-width="0.7"/>
<rect x="1003" y="630.5" width="4" height="3" rx="1" fill="none" stroke="#888" stroke-width="0.8"/><rect x="1009" y="630.5" width="4" height="3" rx="1" fill="none" stroke="#888" stroke-width="0.8"/><rect x="1003" y="635.5" width="4" height="3" rx="1" fill="none" stroke="#888" stroke-width="0.8"/><rect x="1009" y="635.5" width="4" height="3" rx="1" fill="none" stroke="#888" stroke-width="0.8"/>
<rect x="1023" y="627" width="27.5" height="15" fill="#c6c6c6"/>
<path d="M1032.5 630.5 h4 v8 h-4z M1037.5 630.5 h4 v8 h-4z" fill="none" stroke="#777" stroke-width="0.9"/>
<path d="M1059 630.5 h10 v5 h-10z M1064 635.5 v3 M1061.5 639 h5" fill="none" stroke="#888" stroke-width="0.9"/>
</svg>
<!-- TILES --><!--TL-->
<svg class="a" style="left:1080px;top:80px" width="240" height="570" viewBox="1080 80 240 570"><defs><filter id="bl" x="-10%" y="-10%" width="120%" height="120%"><feGaussianBlur stdDeviation="1.1"/></filter>
<filter id="bl2"><feGaussianBlur stdDeviation="0.8"/></filter>
<clipPath id="c1"><path d="M1149 173 v-82 a6 6 0 0 1 6 -6 h146 a6 6 0 0 1 6 6 v82z"/></clipPath>
<clipPath id="c2"><rect x="1148" y="175" width="160" height="89"/></clipPath>
<clipPath id="c3"><rect x="1148" y="264" width="160" height="90"/></clipPath>
<clipPath id="c4"><rect x="1148" y="354" width="160" height="90"/></clipPath>
<clipPath id="c5"><rect x="1148" y="444" width="160" height="90"/></clipPath>
<clipPath id="c6"><path d="M1148 534 h160 v84 a6 6 0 0 1 -6 6 h-148 a6 6 0 0 1 -6 -6z"/></clipPath></defs><g clip-path="url(#c1)"><g filter="url(#bl)"><rect x="1140" y="80" width="180" height="100" fill="#a6aa9c"/><rect x="1140" y="80" width="105" height="23" fill="#dad6d6"/><rect x="1140" y="100" width="105" height="4" fill="#c8c6c2"/><rect x="1140" y="93" width="17" height="85" fill="#5a2a22"/><rect x="1243" y="80" width="80" height="100" fill="#f6f8f6"/><rect x="1239" y="80" width="9" height="100" fill="#566258"/><path d="M1276 80 l8 100 h-3 l-8 -100z" stroke="none" stroke-width="1" fill="#c4ccc8" /><ellipse cx="1292" cy="96" rx="18" ry="12" fill="#434d43" /><ellipse cx="1300" cy="112" rx="9" ry="9" fill="#4e584c" /><ellipse cx="1282" cy="92" rx="7" ry="6" fill="#586258" /><rect x="1292" y="148" width="16" height="30" fill="#b8c8a8"/><path d="M1168 180 q4 -30 34 -34 q22 -4 42 0 q32 4 38 34z" stroke="none" stroke-width="1" fill="#48444a" /><path d="M1201 148 v-32 q0 -25 22 -25 q22 0 22 25 v32z" stroke="none" stroke-width="1" fill="#3a2a28" /><ellipse cx="1223.5" cy="121" rx="17" ry="23" fill="#8c6c62" /><rect x="1215" y="138" width="17" height="10" fill="#7a5a52"/><ellipse cx="1217" cy="116" rx="3.5" ry="1.6" fill="#4a3430" /><ellipse cx="1231" cy="116" rx="3.5" ry="1.6" fill="#4a3430" /><ellipse cx="1224" cy="132" rx="4" ry="1.5" fill="#6a4a44" /></g></g><g clip-path="url(#c2)"><g filter="url(#bl)"><rect x="1140" y="170" width="180" height="100" fill="#dec4aa"/><rect x="1140" y="170" width="32" height="100" fill="#e6dac6"/><rect x="1184" y="170" width="130" height="18" fill="#f0ece8"/><rect x="1184" y="187" width="130" height="2" fill="#d8d0c8"/><path d="M1175 177 h9 v90 h-15z" stroke="none" stroke-width="1" fill="#98704a" /><path d="M1177 195 h5 v55 h-8z" stroke="none" stroke-width="1" fill="#606860" /><path d="M1182 268 q6 -34 30 -38 q16 -2 30 0 q28 4 40 38z" stroke="none" stroke-width="1" fill="#1c1a1c" /><path d="M1210 214 q-2 -28 20 -28 q22 0 20 28z" stroke="none" stroke-width="1" fill="#2e2428" /><ellipse cx="1229" cy="218" rx="17" ry="23" fill="#c29a8a" /><rect x="1222" y="236" width="14" height="8" fill="#b08878"/><ellipse cx="1222" cy="213" rx="3.5" ry="1.4" fill="#5a3a38" /><ellipse cx="1236" cy="213" rx="3.5" ry="1.4" fill="#5a3a38" /><ellipse cx="1229" cy="230" rx="4" ry="1.3" fill="#9a6a60" /><rect x="1282" y="254" width="8" height="12" fill="#d04848"/></g></g><g clip-path="url(#c3)"><g filter="url(#bl)"><rect x="1140" y="260" width="180" height="100" fill="#8a7a58"/><rect x="1140" y="260" width="78" height="100" fill="#b07850"/><rect x="1152" y="260" width="2.5" height="100" fill="#dccab8"/><rect x="1162.5" y="260" width="2.5" height="100" fill="#e2d2c2"/><rect x="1207" y="260" width="2.5" height="100" fill="#c8a080"/><rect x="1216" y="260" width="3" height="100" fill="#502818"/><rect x="1219" y="260" width="32" height="30" fill="#3a3030"/><circle cx="1227" cy="270" r="6" fill="#e03030" /><circle cx="1225" cy="271" r="2.5" fill="#f0c040" /><ellipse cx="1274" cy="288" rx="24" ry="26" fill="#8a7a58" /><rect x="1296" y="260" width="20" height="48" fill="#2a3838"/><rect x="1294" y="308" width="22" height="10" fill="#c0ccd0"/><rect x="1290" y="318" width="25" height="40" fill="#a4a482"/><path d="M1204 358 v-50 q0 -40 36 -40 q36 0 36 40 v50z" stroke="none" stroke-width="1" fill="#3a2a2a" /><ellipse cx="1243" cy="305" rx="20" ry="25.5" fill="#d0aaa0" /><ellipse cx="1261" cy="324" rx="14" ry="11.5" fill="#e0b8b0" /><path d="M1219 358 v-30 q14 -6 31 0 v30z" stroke="none" stroke-width="1" fill="#e8ecec" /><path d="M1262 358 q4 -26 18 -28 q16 4 24 28z" stroke="none" stroke-width="1" fill="#a8b0b8" /><ellipse cx="1235" cy="300" rx="3.5" ry="1.4" fill="#7a5a54" /><ellipse cx="1251" cy="300" rx="3.5" ry="1.4" fill="#7a5a54" /></g></g><g clip-path="url(#c4)"><g filter="url(#bl)"><rect x="1140" y="350" width="180" height="100" fill="#c0b4a4"/><rect x="1140" y="350" width="62" height="100" fill="#d8d8cc"/><rect x="1161" y="350" width="2.4" height="100" fill="#5a4a40"/><rect x="1168.7" y="350" width="2.4" height="100" fill="#5a4a40"/><rect x="1175.7" y="350" width="2.4" height="100" fill="#5a4a40"/><rect x="1181" y="350" width="2.4" height="100" fill="#5a4a40"/><rect x="1186.9" y="350" width="2.4" height="100" fill="#5a4a40"/><rect x="1192.7" y="350" width="2.4" height="100" fill="#5a4a40"/><rect x="1197" y="350" width="16" height="100" fill="#8a7a68"/><rect x="1213" y="350" width="28" height="22" fill="#e8f0f0"/><rect x="1253" y="350" width="22" height="100" fill="#b0a08a"/><rect x="1274" y="350" width="8" height="100" fill="#402820"/><rect x="1282" y="350" width="30" height="100" fill="#1a1c22"/><rect x="1282" y="361" width="30" height="13" fill="#404858"/><rect x="1282" y="424" width="30" height="25" fill="#283a70"/><ellipse cx="1243" cy="390" rx="25" ry="26" fill="#8a7c7c" /><ellipse cx="1222.5" cy="395.5" rx="19.5" ry="24" fill="#fafafa" /><path d="M1212 448 q2 -36 20 -38 q20 0 22 38z" stroke="none" stroke-width="1" fill="#d0c0c0" /><ellipse cx="1227" cy="418" rx="4" ry="1.5" fill="#6a5050" /><ellipse cx="1240" cy="418" rx="4" ry="1.5" fill="#6a5050" /></g></g><g clip-path="url(#c5)"><g filter="url(#bl)"><rect x="1140" y="440" width="180" height="100" fill="#dcdcda"/><rect x="1140" y="440" width="50" height="50" fill="#e4e4e2"/><rect x="1250" y="440" width="40" height="100" fill="#d4d0cc"/><rect x="1290" y="440" width="25" height="100" fill="#3a2a24"/><path d="M1140 540 v-42 q0 -8 10 -8 h30 q6 0 6 8 v42z" stroke="none" stroke-width="1" fill="#c8c4c0" /><path d="M1245 540 v-42 q2 -8 10 -8 h24 q7 0 7 10 v40z" stroke="#3a3a40" stroke-width="1.2" fill="#8e8c90" /><path d="M1183 512 v-40 q0 -34 33 -34 q33 0 33 34 v40z" stroke="none" stroke-width="1" fill="#e0dcd8" /><ellipse cx="1214.7" cy="492" rx="17.5" ry="22" fill="#c8a8a0" /><path d="M1158 540 q4 -22 24 -26 q14 -2 32 -2 q26 0 40 4 q20 6 24 24z" stroke="none" stroke-width="1" fill="#2090e0" /><ellipse cx="1207" cy="484" rx="4" ry="1.4" fill="#7a5a54" /><ellipse cx="1223" cy="484" rx="4" ry="1.4" fill="#7a5a54" /><ellipse cx="1215" cy="504" rx="5" ry="1.5" fill="#9a6a6a" /></g></g><g clip-path="url(#c6)"><g filter="url(#bl)"><rect x="1140" y="530" width="180" height="100" fill="#e8e8e4"/><rect x="1140" y="530" width="56" height="100" fill="#2e3430"/><rect x="1150.3" y="549.2" width="45.7" height="34" fill="#3a5a48"/><rect x="1152" y="562" width="16" height="21" fill="#2a2a2a"/><rect x="1140" y="583" width="56" height="45" fill="#3a3e3a"/><rect x="1152" y="536" width="10" height="1.5" fill="#aaa"/><rect x="1178" y="536" width="10" height="1.5" fill="#aaa"/><rect x="1160" y="595" width="10" height="1.5" fill="#888"/><rect x="1200" y="547" width="60" height="11.6" fill="#3a4440"/><rect x="1260.5" y="530" width="10" height="38" fill="#2a3038"/><rect x="1270" y="530" width="45" height="100" fill="#fafafa"/><rect x="1257" y="568" width="24.6" height="60" fill="#3a4048"/><path d="M1207.8 592 v-28 q0 -25 24.6 -25 q24.6 0 24.6 25 v28z" stroke="none" stroke-width="1" fill="#a07058" /><ellipse cx="1232.4" cy="572.7" rx="16.4" ry="22.3" fill="#a87868" /><path d="M1198 604 q4 -20 34 -21 q30 1 33 21z" stroke="none" stroke-width="1" fill="#b0b4a8" /><path d="M1186 630 q4 -28 24 -35 h44 q20 7 24 35z" stroke="none" stroke-width="1" fill="#404448" /><path d="M1210 600 q22 10 44 0 v-4 q-22 8 -44 0z" stroke="none" stroke-width="1" fill="#b0b4a8" /><ellipse cx="1225" cy="568" rx="3.5" ry="1.5" fill="#4a3030" /><ellipse cx="1240" cy="568" rx="3.5" ry="1.5" fill="#4a3030" /></g></g><path d="M1148 174 v-82 a8 8 0 0 1 8 -8 h144 a8 8 0 0 1 8 8 v79 a3 3 0 0 1 -3 3z" stroke="#1ee08c" stroke-width="2.2" fill="none" /><rect x="1151" y="152.7" width="130" height="19" fill="#2c2c2c" rx="3.5" opacity="0.72"/><text  x="1154.5" y="166.7" font-size="12.6" fill="#ffffff" font-weight="normal" font-family="Liberation Sans" textLength="122.5" lengthAdjust="spacingAndGlyphs">Світлана Мосенцева</text><rect x="1151" y="243" width="119" height="19" fill="#2c2c2c" rx="3.5" opacity="0.72"/><path d="M1158.0 247 a2 2 0 0 1 4 0 v4 a2 2 0 0 1 -4 0z" stroke="none" stroke-width="1" fill="#e24a4a" /><path d="M1156.0 250.5 a4 4 0 0 0 8 0 M1160.0 254.5 v2 M1157.5 256.5 h5" stroke="#e24a4a" stroke-width="1" fill="none" /><path d="M1154.5 257 L1165.5 246" stroke="#e24a4a" stroke-width="1.3" fill="none" /><text  x="1172" y="257" font-size="12.6" fill="#ffffff" font-weight="normal" font-family="Liberation Sans" textLength="94.6" lengthAdjust="spacingAndGlyphs">Катерина Кухтін</text><rect x="1151" y="333.4" width="117" height="19" fill="#2c2c2c" rx="3.5" opacity="0.72"/><path d="M1158.0 337.4 a2 2 0 0 1 4 0 v4 a2 2 0 0 1 -4 0z" stroke="none" stroke-width="1" fill="#e24a4a" /><path d="M1156.0 340.9 a4 4 0 0 0 8 0 M1160.0 344.9 v2 M1157.5 346.9 h5" stroke="#e24a4a" stroke-width="1" fill="none" /><path d="M1154.5 347.4 L1165.5 336.4" stroke="#e24a4a" stroke-width="1.3" fill="none" /><text  x="1172" y="347.4" font-size="12.6" fill="#ffffff" font-weight="normal" font-family="Liberation Sans" textLength="93" lengthAdjust="spacingAndGlyphs">Наталія Нікітюк</text><rect x="1151" y="422.6" width="127" height="19" fill="#2c2c2c" rx="3.5" opacity="0.72"/><path d="M1158.0 426.6 a2 2 0 0 1 4 0 v4 a2 2 0 0 1 -4 0z" stroke="none" stroke-width="1" fill="#e24a4a" /><path d="M1156.0 430.1 a4 4 0 0 0 8 0 M1160.0 434.1 v2 M1157.5 436.1 h5" stroke="#e24a4a" stroke-width="1" fill="none" /><path d="M1154.5 436.6 L1165.5 425.6" stroke="#e24a4a" stroke-width="1.3" fill="none" /><text  x="1172" y="436.6" font-size="12.6" fill="#ffffff" font-weight="normal" font-family="Liberation Sans" textLength="101" lengthAdjust="spacingAndGlyphs">Марія Шаталова</text><rect x="1151" y="512.6" width="93" height="19" fill="#2c2c2c" rx="3.5" opacity="0.72"/><text  x="1154" y="526.6" font-size="12.6" fill="#ffffff" font-weight="normal" font-family="Liberation Sans" textLength="85.5" lengthAdjust="spacingAndGlyphs">Віра Лемешко</text><rect x="1151" y="602.8" width="144" height="19" fill="#2c2c2c" rx="3.5" opacity="0.72"/><path d="M1158.0 606.8 a2 2 0 0 1 4 0 v4 a2 2 0 0 1 -4 0z" stroke="none" stroke-width="1" fill="#e24a4a" /><path d="M1156.0 610.3 a4 4 0 0 0 8 0 M1160.0 614.3 v2 M1157.5 616.3 h5" stroke="#e24a4a" stroke-width="1" fill="none" /><path d="M1154.5 616.8 L1165.5 605.8" stroke="#e24a4a" stroke-width="1.3" fill="none" /><text  x="1172.3" y="616.8" font-size="12.6" fill="#ffffff" font-weight="normal" font-family="Liberation Sans" textLength="118" lengthAdjust="spacingAndGlyphs">Ирина Васильченко</text><path d="M1221 637 l7 5 l7 -5" stroke="#8a8a8a" stroke-width="1.6" fill="none" /><rect x="1083" y="368" width="1.2" height="26" fill="#aaaaaa"/><rect x="1086" y="368" width="1.2" height="26" fill="#aaaaaa"/></svg>
<!--/TL-->
<!-- PENCIL + CURSOR -->
<svg class="a" style="left:26px;top:604px" width="32" height="33" viewBox="26 604 32 33"><circle cx="42" cy="620.5" r="15.8" fill="#2a2a2e"/><path d="M35.2 626.5 v-3.5 l9.5 -9.5 l3.5 3.5 l-9.5 9.5z M42.8 615.4 l3.5 3.5" stroke="#1ee08c" stroke-width="1.3" fill="none" stroke-linejoin="round"/><path d="M35 628.5 h14" stroke="#1ee08c" stroke-width="1.3"/></svg>
<svg class="a" style="left:704px;top:180px" width="12" height="15" viewBox="704 180 12 15"><path d="M706.3 182.3 V191 L708.3 189.3 L710 192.8 L711.4 192.1 L709.8 188.8 L712.7 188.8Z" fill="#fff" stroke="#000" stroke-width="0.7" stroke-linejoin="round"/></svg>
<!-- TOOLBAR --><!--TB-->
<svg class="a" style="left:0;top:661px" width="1366" height="59" viewBox="0 661 1366 59"><rect x="0" y="661" width="1366" height="59" fill="#000"/><path d="M47 676 a4.7 4.7 0 0 1 9.4 0 v6.5 a4.7 4.7 0 0 1 -9.4 0z" stroke="#ffffff" stroke-width="1.4" fill="none" /><path d="M44.3 681.5 v1 a7.4 7.4 0 0 0 14.8 0 v-1 M51.7 690 v4.2 M47 694.6 h9.4" stroke="#ffffff" stroke-width="1.4" fill="none" /><path d="M40.8 694 L63 672" stroke="#f0165a" stroke-width="2.2" fill="none" stroke-linecap="round"/><text  x="38.900000000000006" y="709.6" font-size="12.6" fill="#e6e6e6" font-weight="normal" font-family="Liberation Sans" textLength="26.199999999999996" lengthAdjust="spacingAndGlyphs">Звук</text><path d="M80.2 685 L83.8 681.4 L87.39999999999999 685" stroke="#a8a8a8" stroke-width="1.2" fill="none" /><rect x="133.5" y="676.8" width="15.6" height="13" fill="none" rx="3.2" stroke="#ffffff" stroke-width="1.4"/><path d="M149.5 683.3 L156.5 677.8 V688.8z" stroke="#ffffff" stroke-width="1.4" fill="none" stroke-linejoin="round"/><text  x="128.6" y="709.6" font-size="12.6" fill="#e6e6e6" font-weight="normal" font-family="Liberation Sans" textLength="32.899999999999984" lengthAdjust="spacingAndGlyphs">Видео</text><path d="M177.4 685 L181 681.4 L184.6 685" stroke="#a8a8a8" stroke-width="1.2" fill="none" /><circle cx="402.2" cy="677.8" r="2.3" fill="none" stroke="#ffffff" stroke-width="1.3"/><circle cx="409.9" cy="681" r="2.1" fill="none" stroke="#ffffff" stroke-width="1.3"/><path d="M403 691 h-4.5 a1.5 1.5 0 0 1 -1.5 -1.5 a5 5 0 0 1 5 -5 h2.5" stroke="#ffffff" stroke-width="1.3" fill="none" /><rect x="404.5" y="686" width="10.5" height="5.5" fill="none" rx="2.75" stroke="#ffffff" stroke-width="1.3"/><text  x="421.8" y="685.5" font-size="11" fill="#e6e6e6" font-weight="normal" font-family="Liberation Sans" textLength="12" lengthAdjust="spacingAndGlyphs">10</text><text  x="376.59999999999997" y="709.6" font-size="12.6" fill="#e6e6e6" font-weight="normal" font-family="Liberation Sans" textLength="58.700000000000024" lengthAdjust="spacingAndGlyphs">Участники</text><path d="M455.4 685 L459 681.4 L462.6 685" stroke="#a8a8a8" stroke-width="1.2" fill="none" /><path d="M509.5 676.5 a3.5 3.5 0 0 1 3.5 -3 h9 a4 4 0 0 1 4 4 v6 a3 3 0 0 1 -1.5 2.5" stroke="#ffffff" stroke-width="1.2" fill="none" /><path d="M508.5 677 h10.5 a4 4 0 0 1 4 4 v5.5 a4 4 0 0 1 -4 4 h-7 l-3 2.5 v-2.5 a4 4 0 0 1 -4 -4 v-5.5 a4 4 0 0 1 4 -4z" stroke="#ffffff" stroke-width="1.2" fill="#000" /><circle cx="510.5" cy="684" r="0.9" fill="#ffffff" /><circle cx="513.8" cy="684" r="0.9" fill="#ffffff" /><circle cx="517.1" cy="684" r="0.9" fill="#ffffff" /><text  x="506.09999999999997" y="709.6" font-size="12.6" fill="#e6e6e6" font-weight="normal" font-family="Liberation Sans" textLength="18.800000000000047" lengthAdjust="spacingAndGlyphs">Чат</text><path d="M545.4 685 L549 681.4 L552.6 685" stroke="#a8a8a8" stroke-width="1.2" fill="none" /><path d="M609.7 692.5 L599.8 682.8 a5.6 5.6 0 0 1 9.9 -5.5 a5.6 5.6 0 0 1 10.7 2.3 a5.6 5.6 0 0 1 -1.5 3.5z" stroke="#ffffff" stroke-width="1.4" fill="none" stroke-linejoin="round"/><text  x="568.7" y="709.6" font-size="12.6" fill="#e6e6e6" font-weight="normal" font-family="Liberation Sans" textLength="83.20000000000002" lengthAdjust="spacingAndGlyphs">Отреагировать</text><path d="M644.1999999999999 685 L647.8 681.4 L651.4 685" stroke="#a8a8a8" stroke-width="1.2" fill="none" /><rect x="697" y="673" width="24" height="19.8" fill="#13e28c" rx="2.5"/><path d="M709 689 v-10 M704.8 683 L709 678.5 L713.2 683" stroke="#000" stroke-width="2" fill="none" /><text  x="675.7" y="709.6" font-size="12.6" fill="#e6e6e6" font-weight="normal" font-family="Liberation Sans" textLength="66.1" lengthAdjust="spacingAndGlyphs">Поделиться</text><circle cx="796" cy="688.7" r="3.3" fill="none" stroke="#ffffff" stroke-width="1.4"/><circle cx="807.8" cy="677.2" r="3.3" fill="none" stroke="#ffffff" stroke-width="1.4"/><path d="M792 681.5 v-3.5 a4 4 0 0 1 4 -4 h3.5 M812.3 685 v3.5 a4 4 0 0 1 -4 4 h-3.5" stroke="#ffffff" stroke-width="1.4" fill="none" /><text  x="766.4000000000001" y="709.6" font-size="12.6" fill="#e6e6e6" font-weight="normal" font-family="Liberation Sans" textLength="72.6999999999999" lengthAdjust="spacingAndGlyphs">Приложения</text><circle cx="886.8" cy="683.5" r="10.6" fill="none" stroke="#ffffff" stroke-width="1.4"/><circle cx="886.8" cy="683.5" r="4.6" fill="#ffffff" /><text  x="866.6" y="709.6" font-size="12.6" fill="#e6e6e6" font-weight="normal" font-family="Liberation Sans" textLength="39.700000000000024" lengthAdjust="spacingAndGlyphs">Запись</text><path d="M968.5 672.5 h11.5 a3 3 0 0 1 3 3 v12 M968.5 672.5 v18.5 a2 2 0 0 0 2 2 h3" stroke="#ffffff" stroke-width="1.4" fill="none" /><path d="M966.5 675.5 h2.5 M966.5 679 h2.5 M966.5 682.5 h2.5 M966.5 686 h2.5 M966.5 689.5 h2.5" stroke="#ffffff" stroke-width="1" fill="none" /><path d="M972.5 677 h7 M972.5 680.5 h7 M972.5 684 h4" stroke="#ffffff" stroke-width="1.3" fill="none" /><rect x="975" y="689.5" width="12" height="4.6" fill="#ffffff" rx="2.3"/><text  x="940.1" y="709.6" font-size="12.6" fill="#e6e6e6" font-weight="normal" font-family="Liberation Sans" textLength="70.20000000000002" lengthAdjust="spacingAndGlyphs">Примечания</text><circle cx="1077.2" cy="683.1" r="11.2" fill="none" stroke="#ffffff" stroke-width="1.4"/><circle cx="1072.6000000000001" cy="683.1" r="1.3" fill="#ffffff" /><circle cx="1077.2" cy="683.1" r="1.3" fill="#ffffff" /><circle cx="1081.8" cy="683.1" r="1.3" fill="#ffffff" /><text  x="1032.7" y="709.6" font-size="12.6" fill="#e6e6e6" font-weight="normal" font-family="Liberation Sans" textLength="89.6" lengthAdjust="spacingAndGlyphs">Дополнительно</text><path d="M1321 672.5 h8.3 v18 l-5.5 3.3 v-18z" stroke="#f0165a" stroke-width="1.5" fill="none" stroke-linejoin="round"/><path d="M1321 672.5 l2.8 3.3" stroke="#f0165a" stroke-width="1.5" fill="none" /><circle cx="1314.3" cy="675.2" r="2.3" fill="none" stroke="#ffffff" stroke-width="1.3"/><path d="M1312 679 l-3 4.5 l2 1 M1312 679 h4 l1.5 4 l3 0.5 M1313.5 683.5 l-1.5 4.5 l-3 5 M1314.5 686 l3.5 3 l1 4" stroke="#ffffff" stroke-width="1.3" fill="none" stroke-linejoin="round" stroke-linecap="round"/><text  x="1300.0" y="709.6" font-size="12.6" fill="#e6e6e6" font-weight="normal" font-family="Liberation Sans" textLength="35.30000000000005" lengthAdjust="spacingAndGlyphs">Выйти</text></svg>
<!--/TB-->
<!-- TASKBAR --><!--TK-->
<svg class="a" style="left:0;top:720px" width="1366" height="48" viewBox="0 720 1366 48"><defs><linearGradient id="tb" x1="0" x2="1" y1="0" y2="0"><stop offset="0" stop-color="#dae5f3"/><stop offset="0.5" stop-color="#d9e0f2"/><stop offset="1" stop-color="#dfe5f3"/></linearGradient>
<linearGradient id="win" x1="0" x2="1" y1="0" y2="1"><stop offset="0" stop-color="#3fc4f5"/><stop offset="1" stop-color="#0a6cd4"/></linearGradient>
<linearGradient id="cop1" x1="0.8" x2="0.2" y1="0" y2="1"><stop offset="0" stop-color="#1f8ef0"/><stop offset="0.45" stop-color="#5cc85a"/><stop offset="0.75" stop-color="#f0c020"/><stop offset="1" stop-color="#f06a30"/></linearGradient><linearGradient id="cop2" x1="0.8" x2="0.2" y1="0" y2="1"><stop offset="0" stop-color="#3a5ef0"/><stop offset="0.4" stop-color="#b060e8"/><stop offset="0.8" stop-color="#f070b0"/><stop offset="1" stop-color="#f08a50"/></linearGradient>
<linearGradient id="edge" x1="0" x2="1" y1="0" y2="1"><stop offset="0" stop-color="#35c1f1"/><stop offset="0.6" stop-color="#1e7fd8"/><stop offset="1" stop-color="#3ad06a"/></linearGradient>
<linearGradient id="tg" x1="0" x2="0" y1="0" y2="1"><stop offset="0" stop-color="#38b0e8"/><stop offset="1" stop-color="#1b88d0"/></linearGradient>
<linearGradient id="zm" x1="0" x2="0" y1="0" y2="1"><stop offset="0" stop-color="#2f7bf0"/><stop offset="1" stop-color="#0b4fd0"/></linearGradient>
<linearGradient id="cloud" x1="0" x2="0" y1="0" y2="1"><stop offset="0" stop-color="#b8d4f4"/><stop offset="0.6" stop-color="#e4eefa"/><stop offset="1" stop-color="#c0d8f4"/></linearGradient><linearGradient id="sun" x1="0" x2="1" y1="0" y2="1"><stop offset="0" stop-color="#f8c030"/><stop offset="1" stop-color="#f07010"/></linearGradient></defs><rect x="0" y="720" width="1366" height="48" fill="url(#tb)"/><rect x="0" y="720" width="1366" height="1" fill="#cfd8e6"/><rect x="21" y="732.6" width="11" height="11" fill="url(#win)" rx="0.8"/><rect x="33" y="732.6" width="11" height="11" fill="url(#win)" rx="0.8"/><rect x="21" y="744.6" width="11" height="11" fill="url(#win)" rx="0.8"/><rect x="33" y="744.6" width="11" height="11" fill="url(#win)" rx="0.8"/><rect x="58" y="728.8" width="218" height="30" fill="#f5f8fc" rx="15" stroke="#d3dae6" stroke-width="0.8"/><circle cx="75.2" cy="742.3" r="5.2" fill="none" stroke="#222" stroke-width="1.8"/><path d="M79 746.3 L83 750.5" stroke="#222" stroke-width="2" fill="none" /><text  x="94" y="749.2" font-size="14" fill="#555" font-weight="normal" font-family="Liberation Sans">Пошук</text><path d="M226 756 q-2 -14 6 -22 h14 q8 6 6 22z" stroke="none" stroke-width="1" fill="#6b6e7a" /><rect x="239" y="732.5" width="12" height="22" fill="#c8b890"/><path d="M241.5 755 v-14 a3.5 3.5 0 0 1 7 0 v14z" stroke="none" stroke-width="1" fill="#4a4a50" /><path d="M226 749 q6 -14 10 -12 v19 h-10z M264 749 q-6 -14 -10 -12 v19 h10z" stroke="none" stroke-width="1" fill="#4a5060" /><ellipse cx="236" cy="754" rx="6" ry="3" fill="#4ab040" /><ellipse cx="256" cy="754" rx="6" ry="3" fill="#4ab040" /><rect x="289" y="738.8" width="18" height="16.2" fill="#1e1e1e" rx="1.5"/><rect x="295" y="733" width="17.6" height="15.6" fill="#f4f4f4" rx="1.5" stroke="#e0e0e0" stroke-width="0.5"/><rect x="295" y="738.8" width="12" height="9.8" fill="#b8b8b8"/><path d="M341 733.5 q3 -0.8 5 0.5 l2 2 l-8 15.5 q-1.5 3 -5 3 h-1.5 q-3 0 -2 -3.5 l5 -13 q1.5 -4 4.5 -4.5z" stroke="none" stroke-width="1" fill="url(#cop1)" /><path d="M348 754.5 q-3 0.8 -5 -0.5 l-2 -2 l8 -15.5 q1.5 -3 5 -3 h1.5 q3 0 2 3.5 l-5 13 q-1.5 4 -4.5 4.5z" stroke="none" stroke-width="1" fill="url(#cop2)" /><path d="M376.6 735 a1.5 1.5 0 0 1 1.5 -1.5 h6 l2 2 h13.6 a1.5 1.5 0 0 1 1.5 1.5 v17 h-24.6z" stroke="none" stroke-width="1" fill="#e8b020" /><rect x="376.6" y="737.5" width="24.6" height="16.5" fill="#f9cd4a" rx="1"/><rect x="382" y="747.5" width="14" height="6.5" fill="#1f80d8" rx="1"/><circle cx="433" cy="744" r="12.2" fill="url(#edge)" /><path d="M426 746 a7 6 0 0 1 13 -1 q0 3 -4 3 h-3 q2 4 8 4 q3 0 6 -1 q-4 6 -11 5 q-9 -2 -9 -10z" stroke="none" stroke-width="1" fill="#0f5db8" /><circle cx="435" cy="745" r="2.2" fill="#eaf2fa" /><rect x="465" y="737" width="23" height="19" fill="#124a8e" rx="2.5"/><path d="M471 737 v-2.5 a5.5 3.5 0 0 1 11 0 v2.5" stroke="#35b0f0" stroke-width="1.6" fill="none" /><rect x="470.5" y="741.5" width="5.5" height="5.5" fill="#f25022"/><rect x="477" y="741.5" width="5.5" height="5.5" fill="#7fba00"/><rect x="470.5" y="748" width="5.5" height="5.5" fill="#00a4ef"/><rect x="477" y="748" width="5.5" height="5.5" fill="#ffb900"/><circle cx="521" cy="744" r="12.1" fill="#db4437" /><path d="M521 744 L510.5 750 A12.1 12.1 0 0 0 521 756.1z" stroke="none" stroke-width="1" fill="#0f9d58" /><path d="M510.5 750 A12.1 12.1 0 0 1 512.5 735.5 L521 744z" stroke="none" stroke-width="1" fill="#db4437" /><path d="M521 744 L533.1 744 A12.1 12.1 0 0 1 521 756.1z" stroke="none" stroke-width="1" fill="#f4b400" /><path d="M521 744 L510.5 750 A12.1 12.1 0 0 0 525 755.4 z" stroke="none" stroke-width="1" fill="#0f9d58" /><circle cx="521" cy="744" r="5.3" fill="#fff" /><circle cx="521" cy="744" r="4.1" fill="#4285f4" /><circle cx="565" cy="744.5" r="11.8" fill="url(#tg)" /><path d="M558 745 l13 -5 l-3 11 l-4 -3z" stroke="none" stroke-width="1" fill="#fff" /><rect x="560.2" y="727" width="26.7" height="15.5" fill="#1c74d0" rx="7.7" stroke="#e4ecf6" stroke-width="1"/><text text-anchor="middle" x="573.5" y="738.8" font-size="11" fill="#fff" font-weight="normal" font-family="Liberation Sans">99+</text><path d="M608.8 733.2 a10.8 10 0 1 1 -4 19.5 l-2.5 3 v-4 a10.8 10 0 0 1 6.5 -18.5z" stroke="#fff" stroke-width="1.2" fill="#7d5ee8" /><path d="M604 740 q1 6 8 9 l2 -2 l-2.5 -2 l-1.3 1 q-2 -1 -3 -3 l1 -1.3 l-2 -2.5z" stroke="none" stroke-width="1" fill="#fff" /><rect x="668" y="725" width="4" height="38" fill="#eef2fa" rx="2" stroke="#d8e0ec" stroke-width="0.5"/><rect x="633.7" y="725" width="34.4" height="38" fill="#f2f5fb" rx="4" stroke="#dde4ee" stroke-width="0.6"/><circle cx="652.9" cy="744" r="11.9" fill="url(#zm)" /><text text-anchor="middle" x="652.9" y="748.2" font-size="11.5" fill="#fff" font-weight="bold" font-family="Liberation Sans">zm</text><rect x="645.2" y="760" width="15.6" height="3" fill="#1a73d8" rx="1.5"/><ellipse cx="697" cy="744" rx="11.3" ry="11.3" fill="#e0102a" /><ellipse cx="697" cy="744" rx="5" ry="8.2" fill="url(#tb)" /><circle cx="740.9" cy="744" r="12.1" fill="#0866ff" /><path d="M743 756 v-9 h3 l0.5 -3.3 h-3.5 v-2.2 q0 -1.7 1.8 -1.7 h1.9 v-3 q-1.5 -0.3 -3 -0.3 q-4.5 0 -4.5 4.6 v2.6 h-3 v3.3 h3 v9z" stroke="none" stroke-width="1" fill="#fff" /><rect x="775.7" y="734" width="18.3" height="20" fill="#3bb8d8"/><rect x="775.7" y="752.5" width="18.3" height="3" fill="#b45a1a"/><rect x="778.5" y="740" width="12.5" height="1.6" fill="#1a7090"/><rect x="778.5" y="743.5" width="12.5" height="1.6" fill="#1a7090"/><rect x="778.5" y="747" width="12.5" height="1.6" fill="#1a7090"/><rect x="777.5" y="732" width="1.8" height="3" fill="#1a6a88"/><rect x="781" y="732" width="1.8" height="3" fill="#1a6a88"/><rect x="784.5" y="732" width="1.8" height="3" fill="#1a6a88"/><rect x="788" y="732" width="1.8" height="3" fill="#1a6a88"/><rect x="791.5" y="732" width="1.8" height="3" fill="#1a6a88"/><rect x="386.2" y="760.2" width="5.6" height="2.6" fill="#7a7f88" rx="1.3"/><rect x="430.2" y="760.2" width="5.6" height="2.6" fill="#7a7f88" rx="1.3"/><rect x="518.2" y="760.2" width="5.6" height="2.6" fill="#7a7f88" rx="1.3"/><rect x="562.2" y="760.2" width="5.6" height="2.6" fill="#7a7f88" rx="1.3"/><rect x="782.2" y="760.2" width="5.6" height="2.6" fill="#7a7f88" rx="1.3"/><circle cx="925.5" cy="740.5" r="5.6" fill="url(#sun)" /><path d="M912.5 753.8 a4.6 4.6 0 0 1 -0.5 -9.2 a7 6.5 0 0 1 13 -1.5 a5 5 0 0 1 2.5 10.7z" stroke="#8ab8ec" stroke-width="0.7" fill="url(#cloud)" /><text  x="938.5" y="739.5" font-size="12" fill="#222" font-weight="normal" font-family="Liberation Sans">8°C</text><text  x="938.5" y="756.3" font-size="12.5" fill="#5a5a5a" font-weight="normal" font-family="Liberation Sans" textLength="76.5" lengthAdjust="spacingAndGlyphs">Mostly cloudy</text><path d="M1072.5 748 L1077.5 743 L1082.5 748" stroke="#222" stroke-width="1.5" fill="none" /><path d="M1102 741 a7.5 7.5 0 0 1 13 -2 M1115 735.5 v3.8 h-3.8 M1116 746 a7.5 7.5 0 0 1 -13 2 M1103 751.5 v-3.8 h3.8" stroke="#222" stroke-width="1.4" fill="none" /><circle cx="1115.5" cy="749.5" r="3.3" fill="#1a73e8" /><path d="M1134 734.5 a2.2 2.2 0 0 1 4.4 0 v5 a2.2 2.2 0 0 1 -4.4 0z M1132 739 a4.2 4.2 0 0 0 8.4 0 M1136.2 743.5 v2.5" stroke="#1a5fc8" stroke-width="1.3" fill="none" /><path d="M1141.5 743 l10.5 -5.5 l-4.5 11 l-1.5 -4z" stroke="#1a5fc8" stroke-width="1.3" fill="none" stroke-linejoin="round"/><text  x="1169" y="749.2" font-size="11.5" fill="#222" font-weight="normal" font-family="Liberation Sans" textLength="20.6" lengthAdjust="spacingAndGlyphs">УКР</text><path d="M1209.5 741 a11 11 0 0 1 15.5 0 M1212 744 a7 7 0 0 1 10.5 0 M1214.5 747 a3.5 3.5 0 0 1 5.5 0" stroke="#222" stroke-width="1.4" fill="none" /><circle cx="1217.2" cy="749.8" r="1.1" fill="#222" /><path d="M1233 741.5 h3 l4.5 -4 v15 l-4.5 -4 h-3z" stroke="#222" stroke-width="1.2" fill="none" stroke-linejoin="round"/><path d="M1243 741.5 a4 4 0 0 1 0 6 M1245.5 739 a7.5 7.5 0 0 1 0 11" stroke="#222" stroke-width="1.1" fill="none" /><rect x="1257" y="740.5" width="13.5" height="8.5" fill="none" rx="2" stroke="#222" stroke-width="1.3"/><rect x="1259" y="742.5" width="4" height="4.5" fill="#222"/><rect x="1271" y="743" width="1.8" height="3.5" fill="#222" rx="0.5"/><text text-anchor="end" x="1347" y="740.5" font-size="12" fill="#222" font-weight="normal" font-family="Liberation Sans">10:11</text><text  x="1289.2" y="756.3" font-size="12" fill="#222" font-weight="normal" font-family="Liberation Sans" textLength="57.8" lengthAdjust="spacingAndGlyphs">28.10.2025</text></svg>
<!--/TK-->
</body></html>
